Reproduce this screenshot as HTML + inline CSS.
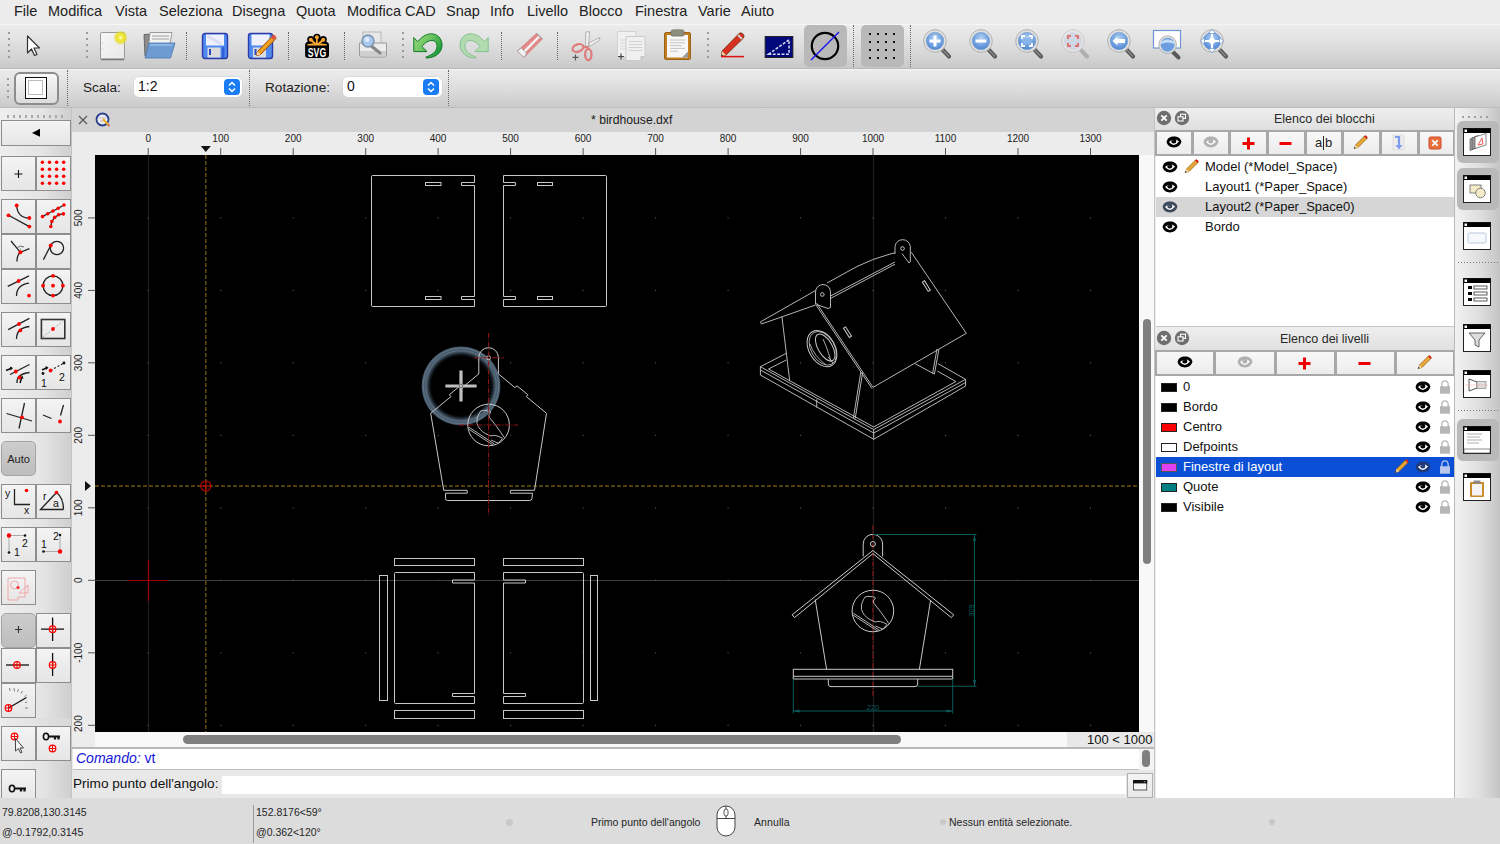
<!DOCTYPE html>
<html><head><meta charset="utf-8">
<style>
*{box-sizing:border-box;margin:0;padding:0}
html,body{width:1500px;height:844px;overflow:hidden;background:#ececec;font-family:"Liberation Sans",sans-serif;color:#111}
.a{position:absolute}
#menubar{left:0;top:0;width:1500px;height:24px;background:#ececec}
#menubar span{position:absolute;top:3px;font-size:14.5px;color:#222}
#tb1{left:0;top:24px;width:1500px;height:45px;background:linear-gradient(#ececec,#e4e4e4 30%,#d6d6d6 70%,#c9c9c9);box-shadow:inset 0 1px #f6f6f6;border-bottom:1px solid #b8b8b8}
#tb2{left:0;top:69px;width:1500px;height:39px;background:linear-gradient(#ececec,#e4e4e4 30%,#d6d6d6 70%,#cacaca);box-shadow:inset 0 1px #f4f4f4;border-bottom:1px solid #bcbcbc}
.sep{position:absolute;width:1px;border-left:1px dotted #666}
.hdl{position:absolute;width:2px;background:repeating-linear-gradient(#9c9c9c 0 2px,transparent 2px 6px)}
#lefttb{left:0;top:108px;width:72px;height:690px;background:linear-gradient(90deg,#eeeeee,#e4e4e4 60%,#cfcfcf);border-right:1px solid #c8c8c8}
.btn{position:absolute;background:linear-gradient(#f2f2f2,#e9e9e9);border:2px solid #8f8f8f}
#mdi{left:72px;top:108px;width:1082px;height:640px;background:#ececec}
#tabbar{left:72px;top:108px;width:1082px;height:24px;background:#d5d5d5}
#canvas{left:95px;top:155px;width:1044px;height:577px;background:#000}
#dock{left:1154px;top:108px;width:301px;height:690px;background:#ececec}
#righttb{left:1455px;top:108px;width:45px;height:690px;background:linear-gradient(90deg,#eeeeee,#d0d0d0)}
#status{left:0;top:798px;width:1500px;height:46px;background:#dcdcdc}
.st{position:absolute;font-size:10.5px;color:#222}
</style></head><body>
<div id="menubar" class="a">
<span style="left:14px">File</span>
<span style="left:48px">Modifica</span>
<span style="left:115px">Vista</span>
<span style="left:159px">Seleziona</span>
<span style="left:232px">Disegna</span>
<span style="left:296px">Quota</span>
<span style="left:347px">Modifica CAD</span>
<span style="left:446px">Snap</span>
<span style="left:490px">Info</span>
<span style="left:527px">Livello</span>
<span style="left:579px">Blocco</span>
<span style="left:635px">Finestra</span>
<span style="left:698px">Varie</span>
<span style="left:741px">Aiuto</span>
</div>
<div id="tb1" class="a">
<!-- handle -->
<div class="hdl" style="left:86px;top:8px;height:26px"></div>
<!-- pointer -->
<svg class="a" style="left:24px;top:10px" width="18" height="24" viewBox="0 0 18 24"><path d="M3.5 2 L3.5 19 L7.5 15 L10.5 21.5 L13 20.5 L10 14 L15.5 14 Z" fill="#fff" stroke="#333" stroke-width="1.2" stroke-linejoin="round"/></svg>
<div class="hdl" style="left:8px;top:8px;height:26px"></div>
<!-- new -->
<svg class="a" style="left:99px;top:7px" width="28" height="30" viewBox="0 0 28 30"><defs><linearGradient id="gnew" x1="0" y1="0" x2="1" y2="1"><stop offset="0" stop-color="#f6f6f6"/><stop offset="1" stop-color="#e8e8e8"/></linearGradient><radialGradient id="gglow"><stop offset="0" stop-color="#ffffd8"/><stop offset=".3" stop-color="#f4ec40"/><stop offset=".65" stop-color="#e8dc20" stop-opacity=".85"/><stop offset="1" stop-color="#e8dc20" stop-opacity="0"/></radialGradient></defs><rect x="1.5" y="1.5" width="24" height="27" rx="1" fill="url(#gnew)" stroke="#9a9a9a" stroke-width="1"/><rect x="2" y="27.5" width="23" height="1.8" fill="#7a7a7a"/><circle cx="21.7" cy="6.7" r="7.5" fill="url(#gglow)"/><path d="M3 12 H4 M3 18 H4" stroke="#bbb" stroke-width=".8"/></svg>
<!-- open -->
<svg class="a" style="left:142px;top:7px" width="34" height="30" viewBox="0 0 34 30"><path d="M2 3.5 L9 3 L8 26 L3 25 Z" fill="#8c8c8c" stroke="#555" stroke-width=".8"/><path d="M8 1.5 L30 1.5 L27 18 L6 20 Z" fill="#f2f2f2" stroke="#888" stroke-width=".8"/><path d="M10 5 L27 5 M10 8 L27 8" stroke="#bdbdbd" stroke-width="1.5"/><path d="M7 12 L33 12 L28.5 27 L3 27 Z" fill="#6d9bd2" stroke="#4a77b0" stroke-width=".8"/><path d="M8 13 L31 13 L30 15 L7.5 15 Z" fill="#8fb6e2"/></svg>
<div class="sep" style="left:186px;top:8px;height:28px"></div>
<!-- save -->
<svg class="a" style="left:201px;top:8px" width="28" height="28" viewBox="0 0 28 28"><rect x="1.5" y="1.5" width="25" height="25" rx="2.5" fill="#4f8af0" stroke="#2c3aa8" stroke-width="1.4"/><rect x="5" y="2.5" width="18" height="11" fill="#eef0fa"/><path d="M6 4 L20 12" stroke="#d8ddf4" stroke-width="3"/><rect x="6.5" y="15.5" width="13" height="10" fill="#dcdcdc"/><rect x="8" y="17" width="2" height="6" fill="#2b46c0"/><rect x="21" y="15" width="2.5" height="11" fill="#2f5fd8"/></svg>
<!-- save as -->
<svg class="a" style="left:247px;top:7px" width="30" height="29" viewBox="0 0 30 29"><rect x="1.5" y="2.5" width="24" height="25" rx="2.5" fill="#4f8af0" stroke="#2c3aa8" stroke-width="1.4"/><rect x="4.5" y="3.5" width="18" height="11" fill="#eef0fa"/><rect x="6" y="16.5" width="13" height="10" fill="#dcdcdc"/><rect x="7.5" y="18" width="2" height="6" fill="#2b46c0"/><path d="M10.5 20.5 L26 4.5 L29 7.5 L13.5 23.5 L9.5 24.5 Z" fill="#f0a020" stroke="#9a4a10" stroke-width="1"/><path d="M24 6.5 L27 3.5 L29.5 6 L26.5 9 Z" fill="#e25040"/><path d="M10.5 20.5 L13.5 23.5 L9.5 24.5 Z" fill="#f4d8a8"/></svg>
<div class="sep" style="left:288px;top:8px;height:28px"></div>
<!-- svg -->
<svg class="a" style="left:304px;top:9px" width="26" height="26" viewBox="0 0 26 26"><rect x="1.1" y="9" width="23.9" height="15.9" rx="3.2" fill="#000"/><circle cx="12.9" cy="4.3" r="3.6" fill="#000"/><circle cx="6.8" cy="6.6" r="3.6" fill="#000"/><circle cx="19.2" cy="6.6" r="3.6" fill="#000"/><path d="M4 8 L22 8 L24 11 L2 11 Z" fill="#000"/><path d="M6.8 6.6 L12.9 4.3 L19.2 6.6 L19 10 L7 10 Z" fill="#000"/><g fill="#f8a732"><circle cx="12.9" cy="4.3" r="2"/><circle cx="6.8" cy="6.7" r="2"/><circle cx="19.2" cy="6.7" r="2"/><path d="M3.2 11.2 Q8 10.3 12.9 10 Q18 10.3 22.8 11.2 L22.8 12.6 L3.2 12.6 Z"/><path d="M12 11 L12.1 4.5 L13.7 4.5 L13.8 11 Z"/><path d="M11 11.5 L6 7.6 L7.5 6 L12.5 10.5 Z"/><path d="M15 11.5 L20 7.6 L18.5 6 L13.5 10.5 Z"/></g><text x="13" y="23.8" font-family="Liberation Sans" font-weight="bold" font-size="13" fill="#fff" text-anchor="middle" textLength="18.4" lengthAdjust="spacingAndGlyphs">SVG</text></svg>
<div class="sep" style="left:344px;top:8px;height:28px"></div>
<!-- print preview -->
<svg class="a" style="left:358px;top:7px" width="30" height="28" viewBox="0 0 30 28"><rect x="5" y="1" width="18" height="13" fill="#e8e8e8" stroke="#aaa" stroke-width=".8"/><path d="M1.5 12 L28.5 12 L28.5 24 Q28.5 26 26.5 26 L3.5 26 Q1.5 26 1.5 24 Z" fill="#ececec" stroke="#9a9a9a" stroke-width="1"/><rect x="2" y="20" width="26" height="5" fill="#cfcfcf"/><path d="M12 14 L22 22" stroke="#888" stroke-width="3.2" stroke-linecap="round"/><circle cx="10" cy="10" r="6" fill="#a9c8ee" stroke="#7b8fa8" stroke-width="1.4"/><circle cx="9" cy="8.5" r="2.5" fill="#dbe9fb"/></svg>
<div class="hdl" style="left:402px;top:8px;height:26px"></div>
<!-- undo -->
<svg class="a" style="left:412px;top:8px" width="32" height="28" viewBox="0 0 32 28"><defs><linearGradient id="gund" x1="0" y1="0" x2="1" y2=".6"><stop offset="0" stop-color="#a0dc78"/><stop offset=".5" stop-color="#6cc462"/><stop offset="1" stop-color="#1e9c3c"/></linearGradient></defs><path d="M1.8 5.5 L1.8 19.6 L15 19.6 L9.9 14.5 C13 10.5 16.5 8.5 20 8.5 C23.5 8.5 25 11.5 25 14.5 C25 19.5 20 23 14.1 25 L14 26 C23 26 30 21 30 13 C30 6 25 1.8 19.4 1.8 C14 1.8 9.5 5 5.7 9.7 Z" fill="url(#gund)" stroke="#0f7a28" stroke-width="1"/></svg>
<!-- redo -->
<svg class="a" style="left:458px;top:8px" width="32" height="28" viewBox="0 0 32 28"><g transform="translate(32 0) scale(-1 1)"><path d="M1.8 5.5 L1.8 19.6 L15 19.6 L9.9 14.5 C13 10.5 16.5 8.5 20 8.5 C23.5 8.5 25 11.5 25 14.5 C25 19.5 20 23 14.1 25 L14 26 C23 26 30 21 30 13 C30 6 25 1.8 19.4 1.8 C14 1.8 9.5 5 5.7 9.7 Z" fill="#b2dcb0" stroke="#86c090" stroke-width="1"/></g></svg>
<div class="sep" style="left:501px;top:8px;height:28px"></div>
<!-- eraser -->
<svg class="a" style="left:515px;top:7px" width="30" height="30" viewBox="0 0 30 30"><ellipse cx="15" cy="26.5" rx="12" ry="1.8" fill="#d4d4d4"/><path d="M21.4 2.4 L27.4 8.1 L9 26.4 L2.4 20.1 Z" fill="#e48888" stroke="#c87070" stroke-width=".6"/><path d="M23.6 4.5 L25.3 6.1 L7.2 24.4 L5.3 22.7 Z" fill="#f4f4f4"/><path d="M2.4 20.1 L6.2 17 L11.6 22.3 L9 26.4 Z" fill="#f2f2f2" stroke="#999" stroke-width=".7"/><path d="M21.4 2.4 L27.4 8.1" stroke="#999" stroke-width="1.2"/></svg>
<div class="sep" style="left:557px;top:8px;height:28px"></div>
<!-- scissors -->
<svg class="a" style="left:570px;top:5px" width="32" height="34" viewBox="0 0 32 34"><path d="M15.8 2.8 L19.6 2.8 L18.5 17.5 L15.5 17 Z" fill="#f0f0f0" stroke="#9a9a9a" stroke-width=".7"/><path d="M19 13.9 L29.7 8.5 L29.7 11 L19 18 Z" fill="#f0f0f0" stroke="#9a9a9a" stroke-width=".7"/><ellipse cx="7.9" cy="19" rx="5.6" ry="3.6" transform="rotate(-20 7.9 19)" fill="none" stroke="#e07a7a" stroke-width="2.2"/><ellipse cx="18.3" cy="25.6" rx="3.2" ry="5.6" fill="none" stroke="#e07a7a" stroke-width="2.2"/><path d="M13 18.5 L17 18 L18.3 20" stroke="#e07a7a" stroke-width="2.2" fill="none"/><path d="M2.5 28.4 H8.5 M5.5 25.4 V31.4" stroke="#555" stroke-width="1.1"/></svg>
<!-- copy -->
<svg class="a" style="left:616px;top:6px" width="32" height="32" viewBox="0 0 32 32"><path d="M1.5 1.5 L20 1.5 L20 27 L1.5 27 Z" fill="#f0f0f0" stroke="#ccc" stroke-width=".8"/><path d="M4 10 L16 10 M4 13 L16 13 M4 16 L16 16 M4 19 L16 19" stroke="#d8d8d8" stroke-width="1"/><path d="M10 6.5 L29 6.5 L29 26 L24.5 30.5 L10 30.5 Z" fill="#f0f0f0" stroke="#c4c4c4" stroke-width=".8"/><path d="M13 11.5 L26 11.5 M13 14.5 L26 14.5 M13 17.5 L26 17.5 M13 20.5 L26 20.5" stroke="#d0d0d0" stroke-width="1"/><path d="M24.5 30.5 L24.5 26 L29 26 Z" fill="#c8c8c8"/><path d="M2 26.5 L8 26.5 M5 23.5 L5 29.5" stroke="#444" stroke-width="1.2"/></svg>
<!-- paste -->
<svg class="a" style="left:663px;top:5px" width="30" height="32" viewBox="0 0 30 32"><rect x="1.5" y="3.5" width="26" height="27" rx="1.5" fill="#c17f22" stroke="#9a6418" stroke-width="1"/><rect x="4" y="6" width="21" height="22.5" fill="#f7f7f7"/><path d="M7 11 L22 11 M7 13.8 L22 13.8 M7 16.6 L19 16.6 M7 19.4 L22 19.4 M7 22.2 L15 22.2" stroke="#c4c4c4" stroke-width="1"/><path d="M19 28.5 L25 22.5 L25 28.5 Z" fill="#9a9a9a"/><rect x="8" y="1" width="13" height="6" rx="1.5" fill="#8e8e80" stroke="#6e6e60" stroke-width=".8"/><rect x="11" y=".5" width="7" height="2" fill="#8e8e80"/></svg>
<div class="hdl" style="left:707px;top:8px;height:26px"></div>
<!-- pencil red -->
<svg class="a" style="left:720px;top:6px" width="26" height="28" viewBox="0 0 26 28"><path d="M2 21 L19 3.5 Q21 2 23 4 Q25 6 23.5 8 L6 25 L1.5 26 Z" fill="#d83020" stroke="#7a3a1a" stroke-width=".9"/><path d="M18 5 L22 9" stroke="#c9c9c9" stroke-width="2.2"/><path d="M2 21 L6 25 L1.5 26 Z" fill="#f0d0a0"/><path d="M1.2 26.3 L2.5 24.8" stroke="#333" stroke-width="1.2"/><path d="M1 26.6 L24 26.6" stroke="#e01010" stroke-width="1.5"/></svg>
<!-- blue rect -->
<svg class="a" style="left:764px;top:12px" width="30" height="22" viewBox="0 0 30 23"><rect x=".5" y=".5" width="29" height="22" fill="#00087a" stroke="#222" stroke-width="1"/><path d="M4 19 L25.5 4 L25.5 19 Z" fill="none" stroke="#d8d8f0" stroke-width="1.6" stroke-dasharray="3 1.6"/></svg>
<!-- circle pressed -->
<div class="a" style="left:804px;top:1px;width:43px;height:42px;background:#b9b9b9;border-radius:5px"></div>
<svg class="a" style="left:804px;top:1px" width="43" height="42" viewBox="0 0 43 42"><circle cx="21" cy="21" r="13.2" fill="none" stroke="#000" stroke-width="2.2"/><path d="M7 35 L35 7" stroke="#1010f0" stroke-width="1.3"/></svg>
<div class="sep" style="left:853px;top:1px;height:42px"></div>
<!-- grid pressed -->
<div class="a" style="left:861px;top:1px;width:43px;height:42px;background:#b9b9b9;border-radius:5px"></div>
<svg class="a" style="left:861px;top:1px" width="43" height="42" viewBox="0 0 43 42"><g fill="#111"><rect x="8" y="8" width="2" height="2"/><rect x="16" y="8" width="2" height="2"/><rect x="24" y="8" width="2" height="2"/><rect x="32" y="8" width="2" height="2"/><rect x="8" y="16" width="2" height="2"/><rect x="16" y="16" width="2" height="2"/><rect x="24" y="16" width="2" height="2"/><rect x="32" y="16" width="2" height="2"/><rect x="8" y="24" width="2" height="2"/><rect x="16" y="24" width="2" height="2"/><rect x="24" y="24" width="2" height="2"/><rect x="32" y="24" width="2" height="2"/><rect x="8" y="32" width="2" height="2"/><rect x="16" y="32" width="2" height="2"/><rect x="24" y="32" width="2" height="2"/><rect x="32" y="32" width="2" height="2"/></g></svg>
<div class="sep" style="left:910px;top:1px;height:42px"></div>
<svg class="a" style="left:921px;top:4px" width="34" height="34" viewBox="0 0 34 34"><defs><radialGradient id="zg935" cx=".5" cy=".35" r=".7"><stop offset="0" stop-color="#b8d4f4"/><stop offset=".6" stop-color="#6d9fe0"/><stop offset="1" stop-color="#4c82cf"/></radialGradient></defs><path d="M21 21 L28 28.5" stroke="#5a5a5a" stroke-width="4.2" stroke-linecap="round"/><path d="M21.5 21.5 L27.5 28" stroke="#8a8a8a" stroke-width="1.2" stroke-linecap="round"/><circle cx="14" cy="13" r="11.3" fill="#e2e2e2" stroke="#b0b0b0" stroke-width="1"/><circle cx="14" cy="13" r="8.8" fill="url(#zg935)" stroke="#7f9fc8" stroke-width=".6"/><path d="M14 7.5 V18.5 M8.5 13 H19.5" stroke="#fff" stroke-width="3"/></svg>
<svg class="a" style="left:967px;top:4px" width="34" height="34" viewBox="0 0 34 34"><defs><radialGradient id="zg981" cx=".5" cy=".35" r=".7"><stop offset="0" stop-color="#b8d4f4"/><stop offset=".6" stop-color="#6d9fe0"/><stop offset="1" stop-color="#4c82cf"/></radialGradient></defs><path d="M21 21 L28 28.5" stroke="#5a5a5a" stroke-width="4.2" stroke-linecap="round"/><path d="M21.5 21.5 L27.5 28" stroke="#8a8a8a" stroke-width="1.2" stroke-linecap="round"/><circle cx="14" cy="13" r="11.3" fill="#e2e2e2" stroke="#b0b0b0" stroke-width="1"/><circle cx="14" cy="13" r="8.8" fill="url(#zg981)" stroke="#7f9fc8" stroke-width=".6"/><path d="M8.5 13 H19.5" stroke="#fff" stroke-width="3"/></svg>
<svg class="a" style="left:1013px;top:4px" width="34" height="34" viewBox="0 0 34 34"><defs><radialGradient id="zg1027" cx=".5" cy=".35" r=".7"><stop offset="0" stop-color="#b8d4f4"/><stop offset=".6" stop-color="#6d9fe0"/><stop offset="1" stop-color="#4c82cf"/></radialGradient></defs><path d="M21 21 L28 28.5" stroke="#5a5a5a" stroke-width="4.2" stroke-linecap="round"/><path d="M21.5 21.5 L27.5 28" stroke="#8a8a8a" stroke-width="1.2" stroke-linecap="round"/><circle cx="14" cy="13" r="11.3" fill="#e2e2e2" stroke="#b0b0b0" stroke-width="1"/><circle cx="14" cy="13" r="8.8" fill="url(#zg1027)" stroke="#7f9fc8" stroke-width=".6"/><path d="M9 11 V8 H12 M16 8 H19 V11 M19 15 V18 H16 M12 18 H9 V15" stroke="#fff" stroke-width="1.8" fill="none"/><rect x="10.5" y="10" width="7" height="6" fill="#8ab4ec"/></svg>
<svg class="a" style="left:1059px;top:4px" width="34" height="34" viewBox="0 0 34 34" opacity=".75"><path d="M21 21 L28 28.5" stroke="#a4a4a4" stroke-width="4.2" stroke-linecap="round"/><circle cx="14" cy="13" r="11.3" fill="#e6e6e6" stroke="#c4c4c4" stroke-width="1"/><circle cx="14" cy="13" r="8.8" fill="#c8d4e4"/><path d="M9 11 V8 H12 M16 8 H19 V11 M19 15 V18 H16 M12 18 H9 V15" stroke="#e05050" stroke-width="2" fill="none"/></svg>
<svg class="a" style="left:1105px;top:4px" width="34" height="34" viewBox="0 0 34 34"><defs><radialGradient id="zg1119" cx=".5" cy=".35" r=".7"><stop offset="0" stop-color="#b8d4f4"/><stop offset=".6" stop-color="#6d9fe0"/><stop offset="1" stop-color="#4c82cf"/></radialGradient></defs><path d="M21 21 L28 28.5" stroke="#5a5a5a" stroke-width="4.2" stroke-linecap="round"/><path d="M21.5 21.5 L27.5 28" stroke="#8a8a8a" stroke-width="1.2" stroke-linecap="round"/><circle cx="14" cy="13" r="11.3" fill="#e2e2e2" stroke="#b0b0b0" stroke-width="1"/><circle cx="14" cy="13" r="8.8" fill="url(#zg1119)" stroke="#7f9fc8" stroke-width=".6"/><path d="M7.5 13 L12.5 8.5 V11 H20 V15 H12.5 V17.5 Z" fill="#fff"/></svg>
<svg class="a" style="left:1152px;top:5px" width="34" height="34" viewBox="0 0 34 34"><rect x="1.5" y="1.5" width="27" height="17.5" fill="#fff" stroke="#6f96d0" stroke-width="1.2"/><path d="M20 22 L26.5 28.5" stroke="#5a5a5a" stroke-width="4" stroke-linecap="round"/><circle cx="15.6" cy="15.7" r="8.8" fill="#e2e2e2" stroke="#b0b0b0" stroke-width="1"/><circle cx="15.6" cy="15.7" r="7" fill="#6d9fe0"/><path d="M8.8 15 Q15.6 12 22.4 15 V13 Q15.6 7.5 8.8 13 Z" fill="#c4dcf6"/></svg>
<svg class="a" style="left:1198px;top:4px" width="34" height="34" viewBox="0 0 34 34"><defs><radialGradient id="zg1212" cx=".5" cy=".35" r=".7"><stop offset="0" stop-color="#b8d4f4"/><stop offset=".6" stop-color="#6d9fe0"/><stop offset="1" stop-color="#4c82cf"/></radialGradient></defs><path d="M21 21 L28 28.5" stroke="#5a5a5a" stroke-width="4.2" stroke-linecap="round"/><path d="M21.5 21.5 L27.5 28" stroke="#8a8a8a" stroke-width="1.2" stroke-linecap="round"/><circle cx="14" cy="13" r="11.3" fill="#e2e2e2" stroke="#b0b0b0" stroke-width="1"/><circle cx="14" cy="13" r="8.8" fill="url(#zg1212)" stroke="#7f9fc8" stroke-width=".6"/><circle cx="14" cy="13" r="3" fill="#fff"/><path d="M14 2.5 V23.5 M3.5 13 H24.5" stroke="#fff" stroke-width="2.2"/><path d="M14 1.5 L10.5 5.5 H17.5 Z M14 24.5 L10.5 20.5 H17.5 Z M2.5 13 L6.5 9.5 V16.5 Z M25.5 13 L21.5 9.5 V16.5 Z" fill="#fff" stroke="#4c82cf" stroke-width=".6"/></svg>
</div>

<div id="tb2" class="a">
<div class="hdl" style="left:7px;top:9px;height:20px"></div>
<div class="a" style="left:14px;top:3px;width:45px;height:33px;border:2px solid #8d8d8d;border-radius:6px;background:linear-gradient(#f8f8f8,#e6e6e6 60%,#dcdcdc)"></div>
<div class="a" style="left:25px;top:7.5px;width:22px;height:22px;border:1.6px solid #111;background:#fff"><div class="a" style="left:2px;top:2px;width:15px;height:15px;border:1px solid #bbb"></div></div>
<div class="sep" style="left:67px;top:1px;height:36px"></div>
<span class="a" style="left:83px;top:11px;font-size:13.6px;color:#222">Scala:</span>
<div class="a" style="left:134px;top:8px;width:108px;height:20px;background:#fff;border-radius:5px;box-shadow:0 0 0 .5px #d0d0d0"></div>
<span class="a" style="left:138px;top:9px;font-size:14px;color:#111">1:2</span>
<div class="a" style="left:224px;top:10px;width:16px;height:16px;background:#1a7cf5;border-radius:4px"></div>
<svg class="a" style="left:224px;top:10px" width="16" height="16" viewBox="0 0 16 16"><path d="M5 6.5 L8 3.5 L11 6.5 M5 9.5 L8 12.5 L11 9.5" fill="none" stroke="#fff" stroke-width="1.5"/></svg>
<div class="sep" style="left:249px;top:1px;height:36px"></div>
<span class="a" style="left:265px;top:11px;font-size:13.6px;color:#222">Rotazione:</span>
<div class="a" style="left:343px;top:8px;width:99px;height:20px;background:#fff;border-radius:5px;box-shadow:0 0 0 .5px #d0d0d0"></div>
<span class="a" style="left:347px;top:9px;font-size:14px;color:#111">0</span>
<div class="a" style="left:423px;top:10px;width:16px;height:16px;background:#1a7cf5;border-radius:4px"></div>
<svg class="a" style="left:423px;top:10px" width="16" height="16" viewBox="0 0 16 16"><path d="M5 6.5 L8 3.5 L11 6.5 M5 9.5 L8 12.5 L11 9.5" fill="none" stroke="#fff" stroke-width="1.5"/></svg>
<div class="sep" style="left:448px;top:1px;height:36px"></div>
</div>
<!--LEFT-->
<div id="lefttb" class="a"></div>
<div class="a" style="left:7px;top:115px;width:60px;height:3px;background:repeating-linear-gradient(90deg,#a8a8a8 0 2px,transparent 2px 6px)"></div>
<div class="a" style="left:1px;top:120px;width:70px;height:26px;background:linear-gradient(#f4f4f4,#ececec 50%,#e6e6e6);border:1px solid #8e8e8e"></div><svg class="a" style="left:1px;top:120px" width="70" height="26" viewBox="0 0 70 26"><path d="M31 12.9 L39 8.8 L39 16.8 Z" fill="#000"/></svg>
<div class="a" style="left:1px;top:156px;width:35px;height:35px;background:linear-gradient(#f4f4f4,#ececec 50%,#e6e6e6);border:1px solid #8e8e8e"></div><svg class="a" style="left:1px;top:156px" width="35" height="35" viewBox="0 0 35 35"><path d="M13.5 18 H21.5 M17.5 14 V22" stroke="#111" stroke-width="1.1"/></svg>
<div class="a" style="left:36px;top:156px;width:35px;height:35px;background:linear-gradient(#f4f4f4,#ececec 50%,#e6e6e6);border:1px solid #8e8e8e"></div><svg class="a" style="left:36px;top:156px" width="35" height="35" viewBox="0 0 35 35"><circle cx="6.4" cy="6.3" r="1.75" fill="#f00"/><circle cx="6.4" cy="13.3" r="1.75" fill="#f00"/><circle cx="6.4" cy="20.3" r="1.75" fill="#f00"/><circle cx="6.4" cy="27.3" r="1.75" fill="#f00"/><circle cx="13.5" cy="6.3" r="1.75" fill="#f00"/><circle cx="13.5" cy="13.3" r="1.75" fill="#f00"/><circle cx="13.5" cy="20.3" r="1.75" fill="#f00"/><circle cx="13.5" cy="27.3" r="1.75" fill="#f00"/><circle cx="20.6" cy="6.3" r="1.75" fill="#f00"/><circle cx="20.6" cy="13.3" r="1.75" fill="#f00"/><circle cx="20.6" cy="20.3" r="1.75" fill="#f00"/><circle cx="20.6" cy="27.3" r="1.75" fill="#f00"/><circle cx="27.699999999999996" cy="6.3" r="1.75" fill="#f00"/><circle cx="27.699999999999996" cy="13.3" r="1.75" fill="#f00"/><circle cx="27.699999999999996" cy="20.3" r="1.75" fill="#f00"/><circle cx="27.699999999999996" cy="27.3" r="1.75" fill="#f00"/></svg>
<div class="a" style="left:1px;top:199px;width:35px;height:35px;background:linear-gradient(#f4f4f4,#ececec 50%,#e6e6e6);border:1px solid #8e8e8e"></div><svg class="a" style="left:1px;top:199px" width="35" height="35" viewBox="0 0 35 35"><path d="M7.5 16.3 L28.4 27.6" stroke="#222" stroke-width="1.3" fill="none"/><path d="M15.7 6.5 Q16.5 19 28.4 19" stroke="#222" stroke-width="1.3" fill="none"/><circle cx="7.5" cy="16.3" r="1.9" fill="#f00"/><circle cx="15.7" cy="6.5" r="1.9" fill="#f00"/><circle cx="28.4" cy="19" r="1.9" fill="#f00"/><circle cx="28.4" cy="27.6" r="1.9" fill="#f00"/></svg>
<div class="a" style="left:36px;top:199px;width:35px;height:35px;background:linear-gradient(#f4f4f4,#ececec 50%,#e6e6e6);border:1px solid #8e8e8e"></div><svg class="a" style="left:36px;top:199px" width="35" height="35" viewBox="0 0 35 35"><path d="M6.5 17.6 L11.7 14.7 L17 12 L22.2 9.3 L28 6" stroke="#222" stroke-width="1.3" fill="none"/><path d="M14.8 27.5 L15.8 22.5 L18.7 18.4 L22.7 15.7 L27.4 14.9" stroke="#222" stroke-width="1.3" fill="none"/><circle cx="6.5" cy="17.6" r="1.8" fill="#f00"/><circle cx="11.7" cy="14.7" r="1.8" fill="#f00"/><circle cx="17" cy="12" r="1.8" fill="#f00"/><circle cx="22.2" cy="9.3" r="1.8" fill="#f00"/><circle cx="28" cy="6" r="1.8" fill="#f00"/><circle cx="14.8" cy="27.5" r="1.8" fill="#f00"/><circle cx="15.8" cy="22.5" r="1.8" fill="#f00"/><circle cx="18.7" cy="18.4" r="1.8" fill="#f00"/><circle cx="22.7" cy="15.7" r="1.8" fill="#f00"/><circle cx="27.4" cy="14.9" r="1.8" fill="#f00"/></svg>
<div class="a" style="left:1px;top:234px;width:35px;height:35px;background:linear-gradient(#f4f4f4,#ececec 50%,#e6e6e6);border:1px solid #8e8e8e"></div><svg class="a" style="left:1px;top:234px" width="35" height="35" viewBox="0 0 35 35"><path d="M10 7 L19.4 18.3 L28.4 14.6" stroke="#222" stroke-width="1.3" fill="none"/><path d="M19.4 18.3 Q16 21 15.8 27.5" stroke="#222" stroke-width="1.3" fill="none"/><path d="M16.5 13.5 Q19 11 23 13" stroke="#444" stroke-width=".8" fill="none"/><circle cx="19.5" cy="15" r=".5" fill="#444"/><circle cx="19.4" cy="18.3" r="2" fill="#f00"/></svg>
<div class="a" style="left:36px;top:234px;width:35px;height:35px;background:linear-gradient(#f4f4f4,#ececec 50%,#e6e6e6);border:1px solid #8e8e8e"></div><svg class="a" style="left:36px;top:234px" width="35" height="35" viewBox="0 0 35 35"><circle cx="20.9" cy="14" r="6.7" stroke="#222" stroke-width="1.3" fill="none"/><path d="M14.7 11.5 L7.4 25.6" stroke="#222" stroke-width="1.3" fill="none"/><circle cx="14.7" cy="11.5" r="2" fill="#f00"/></svg>
<div class="a" style="left:1px;top:269px;width:35px;height:35px;background:linear-gradient(#f4f4f4,#ececec 50%,#e6e6e6);border:1px solid #8e8e8e"></div><svg class="a" style="left:1px;top:269px" width="35" height="35" viewBox="0 0 35 35"><path d="M6.8 17.3 L28 6.8" stroke="#222" stroke-width="1.3" fill="none"/><path d="M15.5 27 Q15.5 16 28 14.2" stroke="#222" stroke-width="1.3" fill="none"/><circle cx="17.6" cy="12" r="1.9" fill="#f00"/><circle cx="28" cy="26.6" r="1.9" fill="#f00"/></svg>
<div class="a" style="left:36px;top:269px;width:35px;height:35px;background:linear-gradient(#f4f4f4,#ececec 50%,#e6e6e6);border:1px solid #8e8e8e"></div><svg class="a" style="left:36px;top:269px" width="35" height="35" viewBox="0 0 35 35"><circle cx="17" cy="16.7" r="9.9" stroke="#222" stroke-width="1.3" fill="none"/><circle cx="17" cy="16.7" r="1.9" fill="#f00"/><circle cx="17" cy="6.8" r="1.9" fill="#f00"/><circle cx="17" cy="26.6" r="1.9" fill="#f00"/><circle cx="7.1" cy="16.7" r="1.9" fill="#f00"/><circle cx="26.9" cy="16.7" r="1.9" fill="#f00"/></svg>
<div class="a" style="left:1px;top:304px;width:70px;height:8px;background:linear-gradient(90deg,#ececec,#d8d8d8)"></div>
<div class="a" style="left:1px;top:312px;width:35px;height:35px;background:linear-gradient(#f4f4f4,#ececec 50%,#e6e6e6);border:1px solid #8e8e8e"></div><svg class="a" style="left:1px;top:312px" width="35" height="35" viewBox="0 0 35 35"><path d="M7.2 17.6 L28.4 6.4" stroke="#222" stroke-width="1.3" fill="none"/><path d="M15.5 27 Q15.5 16 28.4 14.5" stroke="#222" stroke-width="1.3" fill="none"/><circle cx="18" cy="12" r="1.9" fill="#f00"/><circle cx="19.3" cy="18.4" r="1.9" fill="#f00"/></svg>
<div class="a" style="left:36px;top:312px;width:35px;height:35px;background:linear-gradient(#f4f4f4,#ececec 50%,#e6e6e6);border:1px solid #8e8e8e"></div><svg class="a" style="left:36px;top:312px" width="35" height="35" viewBox="0 0 35 35"><rect x="5.4" y="7.5" width="23.4" height="19" stroke="#333" stroke-width="1.6" fill="none"/><path d="M7 25 L27 9" stroke="#999" stroke-width=".8" stroke-dasharray="2 1.5"/><circle cx="17" cy="17" r="1.9" fill="#f00"/></svg>
<div class="a" style="left:1px;top:355px;width:35px;height:35px;background:linear-gradient(#f4f4f4,#ececec 50%,#e6e6e6);border:1px solid #8e8e8e"></div><svg class="a" style="left:1px;top:355px" width="35" height="35" viewBox="0 0 35 35"><path d="M9 19.5 L28.5 9.5" stroke="#222" stroke-width="1.3" fill="none"/><path d="M16 28 Q15.5 19 28.5 17.5" stroke="#222" stroke-width="1.3" fill="none"/><path d="M5 15.5 L11 13" stroke="#111" stroke-width="1.5"/><path d="M9 11.5 L12 13 L9.5 15.5 Z" fill="#111"/><path d="M19 28 L21 22" stroke="#111" stroke-width="1.5"/><path d="M19.5 22.5 L21.5 20.5 L22.5 24 Z" fill="#111"/><circle cx="14.8" cy="16.5" r="1.9" fill="#f00"/><circle cx="18.5" cy="22.5" r="1.9" fill="#f00"/></svg>
<div class="a" style="left:36px;top:355px;width:35px;height:35px;background:linear-gradient(#f4f4f4,#ececec 50%,#e6e6e6);border:1px solid #8e8e8e"></div><svg class="a" style="left:36px;top:355px" width="35" height="35" viewBox="0 0 35 35"><path d="M14.5 15.5 L28 8" stroke="#222" stroke-width="1.1" stroke-dasharray="2.2 1.8"/><path d="M6 15 L11.5 12.5" stroke="#111" stroke-width="1.5"/><path d="M9.5 11 L12.5 12.5 L10 15 Z" fill="#111"/><circle cx="14.5" cy="15.5" r="1.9" fill="#f00"/><circle cx="28" cy="8" r="1.4" fill="#111"/><circle cx="7" cy="18.5" r="1.4" fill="#111"/><text x="23" y="26" font-family="Liberation Sans" font-size="10.5" fill="#111">2</text><text x="5" y="32" font-family="Liberation Sans" font-size="10.5" fill="#111">1</text></svg>
<div class="a" style="left:1px;top:398px;width:35px;height:35px;background:linear-gradient(#f4f4f4,#ececec 50%,#e6e6e6);border:1px solid #8e8e8e"></div><svg class="a" style="left:1px;top:398px" width="35" height="35" viewBox="0 0 35 35"><path d="M5.5 15.5 L31 23" stroke="#222" stroke-width="1.3" fill="none"/><path d="M23.5 5 L18 30.5" stroke="#222" stroke-width="1.3" fill="none"/><circle cx="21" cy="19.3" r="1.9" fill="#f00"/></svg>
<div class="a" style="left:36px;top:398px;width:35px;height:35px;background:linear-gradient(#f4f4f4,#ececec 50%,#e6e6e6);border:1px solid #8e8e8e"></div><svg class="a" style="left:36px;top:398px" width="35" height="35" viewBox="0 0 35 35"><path d="M7 17 L15.5 20.5" stroke="#222" stroke-width="1.3" fill="none"/><path d="M27.5 7 L24.5 17.5" stroke="#222" stroke-width="1.3" fill="none"/><circle cx="24" cy="23.5" r="1.9" fill="#f00"/></svg>
<div class="a" style="left:1px;top:441px;width:35px;height:35px;background:linear-gradient(#cdcdcd,#bdbdbd);border:1px solid #a4a4a4;border-radius:5px"></div><svg class="a" style="left:1px;top:441px" width="35" height="35" viewBox="0 0 35 35"><text x="17.5" y="21.5" font-family="Liberation Sans" font-size="11" fill="#222" text-anchor="middle">Auto</text></svg>
<div class="a" style="left:1px;top:484px;width:35px;height:35px;background:linear-gradient(#f4f4f4,#ececec 50%,#e6e6e6);border:1px solid #8e8e8e"></div><svg class="a" style="left:1px;top:484px" width="35" height="35" viewBox="0 0 35 35"><path d="M13.5 5 V20.5 H29" stroke="#222" stroke-width="1.3" fill="none"/><text x="4" y="13" font-family="Liberation Sans" font-size="10.5" fill="#111">y</text><text x="23" y="30" font-family="Liberation Sans" font-size="10.5" fill="#111">x</text><circle cx="25.5" cy="6.5" r="1.8" fill="#f00"/></svg>
<div class="a" style="left:36px;top:484px;width:35px;height:35px;background:linear-gradient(#f4f4f4,#ececec 50%,#e6e6e6);border:1px solid #8e8e8e"></div><svg class="a" style="left:36px;top:484px" width="35" height="35" viewBox="0 0 35 35"><path d="M27.5 25.5 L4.5 25.5 L20.5 8.5 Q27.5 14 27.5 25.5" stroke="#222" stroke-width="1.3" fill="none"/><text x="7" y="16" font-family="Liberation Sans" font-size="10.5" fill="#111">r</text><text x="17" y="23" font-family="Liberation Sans" font-size="10.5" fill="#111">a</text><circle cx="20.5" cy="8.5" r="1.8" fill="#f00"/></svg>
<div class="a" style="left:1px;top:527px;width:35px;height:35px;background:linear-gradient(#f4f4f4,#ececec 50%,#e6e6e6);border:1px solid #8e8e8e"></div><svg class="a" style="left:1px;top:527px" width="35" height="35" viewBox="0 0 35 35"><path d="M8 8.5 H24 M8 8.5 V25.5" stroke="#999" stroke-width=".8"/><circle cx="8" cy="8.5" r="2.2" fill="#f00"/><circle cx="24" cy="8.5" r="1.3" fill="#111"/><circle cx="8" cy="25.5" r="1.3" fill="#111"/><text x="13" y="29" font-family="Liberation Sans" font-size="10.5" fill="#111">1</text><text x="21" y="20" font-family="Liberation Sans" font-size="10.5" fill="#111">2</text></svg>
<div class="a" style="left:36px;top:527px;width:35px;height:35px;background:linear-gradient(#f4f4f4,#ececec 50%,#e6e6e6);border:1px solid #8e8e8e"></div><svg class="a" style="left:36px;top:527px" width="35" height="35" viewBox="0 0 35 35"><path d="M7.5 24.5 H24 V8" stroke="#999" stroke-width=".8" fill="none"/><circle cx="24" cy="24.5" r="2.2" fill="#f00"/><circle cx="24" cy="8" r="1.3" fill="#111"/><circle cx="7.5" cy="24.5" r="1.3" fill="#111"/><text x="17" y="13" font-family="Liberation Sans" font-size="10.5" fill="#111">2</text><text x="5" y="21" font-family="Liberation Sans" font-size="10.5" fill="#111">1</text></svg>
<div class="a" style="left:1px;top:570px;width:35px;height:35px;background:linear-gradient(#f4f4f4,#ececec 50%,#e6e6e6);border:1px solid #8e8e8e"></div><svg class="a" style="left:1px;top:570px" width="35" height="35" viewBox="0 0 35 35"><path d="M7 8 H24 V27 H17 V30 H7 Z" fill="none" stroke="#f0a0a0" stroke-width=".9"/><circle cx="13.5" cy="15" r="4" fill="none" stroke="#f0a0a0" stroke-width=".9"/><path d="M18 23 L27 15 V23 Z" fill="none" stroke="#f0a0a0" stroke-width=".9"/><circle cx="17" cy="17.5" r="1.6" fill="#f03030"/></svg>
<div class="a" style="left:1px;top:613px;width:35px;height:35px;background:linear-gradient(#cdcdcd,#bdbdbd);border:1px solid #a4a4a4;border-radius:5px"></div><svg class="a" style="left:1px;top:613px" width="35" height="35" viewBox="0 0 35 35"><path d="M14 16.5 H21 M17.5 13 V20" stroke="#333" stroke-width="1.1"/></svg>
<div class="a" style="left:36px;top:613px;width:35px;height:35px;background:linear-gradient(#f4f4f4,#ececec 50%,#e6e6e6);border:1px solid #8e8e8e"></div><svg class="a" style="left:36px;top:613px" width="35" height="35" viewBox="0 0 35 35"><path d="M5 16.2 H28 M16.6 4.5 V28" stroke="#111" stroke-width="1.3"/><circle cx="16.6" cy="16.2" r="3.3" fill="none" stroke="#f00" stroke-width="1.2"/><path d="M13.3 16.2 H19.900000000000002 M16.6 12.899999999999999 V19.5" stroke="#f00" stroke-width="1"/></svg>
<div class="a" style="left:1px;top:648px;width:35px;height:35px;background:linear-gradient(#f4f4f4,#ececec 50%,#e6e6e6);border:1px solid #8e8e8e"></div><svg class="a" style="left:1px;top:648px" width="35" height="35" viewBox="0 0 35 35"><path d="M5 17 H28" stroke="#111" stroke-width="1.3"/><circle cx="16" cy="17" r="3.3" fill="none" stroke="#f00" stroke-width="1.2"/><path d="M12.7 17 H19.3 M16 13.7 V20.3" stroke="#f00" stroke-width="1"/></svg>
<div class="a" style="left:36px;top:648px;width:35px;height:35px;background:linear-gradient(#f4f4f4,#ececec 50%,#e6e6e6);border:1px solid #8e8e8e"></div><svg class="a" style="left:36px;top:648px" width="35" height="35" viewBox="0 0 35 35"><path d="M16.6 5 V28" stroke="#111" stroke-width="1.3"/><circle cx="16.6" cy="17" r="3.3" fill="none" stroke="#f00" stroke-width="1.2"/><path d="M13.3 17 H19.900000000000002 M16.6 13.7 V20.3" stroke="#f00" stroke-width="1"/></svg>
<div class="a" style="left:1px;top:683px;width:35px;height:35px;background:linear-gradient(#f4f4f4,#ececec 50%,#e6e6e6);border:1px solid #8e8e8e"></div><svg class="a" style="left:1px;top:683px" width="35" height="35" viewBox="0 0 35 35"><path d="M7.5 25 L25.5 14.5" stroke="#111" stroke-width="1.3"/><path d="M8.5 5 L9 8 M13 5 L13.5 8.5 M17.5 6 L16.5 9 M21.5 8 L20 10.5 M25.5 12 L23.5 13.5 M26 19 L24 19.5 M27 25 L24 25" stroke="#777" stroke-width=".9"/><circle cx="7.5" cy="25" r="3.3" fill="none" stroke="#f00" stroke-width="1.2"/><path d="M4.2 25 H10.8 M7.5 21.7 V28.3" stroke="#f00" stroke-width="1"/></svg>
<div class="a" style="left:1px;top:718px;width:70px;height:8px;background:linear-gradient(90deg,#ececec,#d8d8d8)"></div>
<div class="a" style="left:1px;top:726px;width:35px;height:35px;background:linear-gradient(#f4f4f4,#ececec 50%,#e6e6e6);border:1px solid #8e8e8e"></div><svg class="a" style="left:1px;top:726px" width="35" height="35" viewBox="0 0 35 35"><circle cx="13.5" cy="10.5" r="3.3" fill="none" stroke="#f00" stroke-width="1.2"/><path d="M10.2 10.5 H16.8 M13.5 7.2 V13.8" stroke="#f00" stroke-width="1"/><path d="M14.5 12.5 L14.5 25 L17.3 22.5 L19.5 27 L21 26.3 L19 22 L22.5 22 Z" fill="#f4f4f4" stroke="#333" stroke-width=".9"/></svg>
<div class="a" style="left:36px;top:726px;width:35px;height:35px;background:linear-gradient(#f4f4f4,#ececec 50%,#e6e6e6);border:1px solid #8e8e8e"></div><svg class="a" style="left:36px;top:726px" width="35" height="35" viewBox="0 0 35 35"><ellipse cx="10" cy="10.5" rx="2.6" ry="3.3" fill="none" stroke="#111" stroke-width="1.6"/><path d="M12.5 10.5 H24 M19 10.5 V13.5 M22.5 10.5 V13.5" stroke="#111" stroke-width="2.2"/><circle cx="16.5" cy="22.5" r="3.3" fill="none" stroke="#f00" stroke-width="1.2"/><path d="M13.2 22.5 H19.8 M16.5 19.2 V25.8" stroke="#f00" stroke-width="1"/></svg>
<div class="a" style="left:1px;top:769px;width:35px;height:35px;background:linear-gradient(#f4f4f4,#ececec 50%,#e6e6e6);border:1px solid #8e8e8e"></div><svg class="a" style="left:1px;top:769px" width="35" height="35" viewBox="0 0 35 35"><ellipse cx="11" cy="19.5" rx="2.6" ry="3.3" fill="none" stroke="#111" stroke-width="1.6"/><path d="M13.5 19.5 H25 M20 19.5 V22.5 M23.5 19.5 V22.5" stroke="#111" stroke-width="2.2"/></svg>
<!--/LEFT-->
<!--MDI-->
<div class="a" style="left:71px;top:108px;width:1px;height:690px;background:#c4c4c4"></div>
<div class="a" style="left:72px;top:108px;width:1082px;height:24px;background:#d3d3d3"></div>
<svg class="a" style="left:77px;top:114px" width="12" height="12" viewBox="0 0 12 12"><path d="M2 2 L10 10 M10 2 L2 10" stroke="#555" stroke-width="1.1"/></svg>
<svg class="a" style="left:95px;top:112px" width="16" height="16" viewBox="0 0 16 16"><circle cx="7.5" cy="7.5" r="6" fill="#e8eef8" stroke="#2a3f8a" stroke-width="1.8"/><path d="M4 6 H11 M5 9 H10" stroke="#c88" stroke-width=".6"/><path d="M8 7 L13.5 13" stroke="#e8b020" stroke-width="2"/><path d="M13 12.5 L14.5 14" stroke="#e06060" stroke-width="2"/></svg>
<span class="a" style="left:591px;top:113px;font-size:12.2px;color:#1a1a1a">* birdhouse.dxf</span>
<div class="a" style="left:72px;top:132px;width:1082px;height:23px;background:#ececec"></div>
<div class="a" style="left:72px;top:155px;width:23px;height:592px;background:#ececec"></div>
<svg class="a" style="left:95px;top:131px" width="1059" height="24" viewBox="95 131 1059 24"><g font-family="Liberation Sans" font-size="10" fill="#222"><text x="148.2" y="142" text-anchor="middle">0</text><text x="220.7" y="142" text-anchor="middle">100</text><text x="293.2" y="142" text-anchor="middle">200</text><text x="365.7" y="142" text-anchor="middle">300</text><text x="438.1" y="142" text-anchor="middle">400</text><text x="510.6" y="142" text-anchor="middle">500</text><text x="583.1" y="142" text-anchor="middle">600</text><text x="655.6" y="142" text-anchor="middle">700</text><text x="728.1" y="142" text-anchor="middle">800</text><text x="800.6" y="142" text-anchor="middle">900</text><text x="873.0" y="142" text-anchor="middle">1000</text><text x="945.5" y="142" text-anchor="middle">1100</text><text x="1018.0" y="142" text-anchor="middle">1200</text><text x="1090.5" y="142" text-anchor="middle">1300</text></g><rect x="147.7" y="148" width="1" height="7" fill="#555"/><rect x="220.2" y="148" width="1" height="7" fill="#555"/><rect x="292.7" y="148" width="1" height="7" fill="#555"/><rect x="365.2" y="148" width="1" height="7" fill="#555"/><rect x="437.6" y="148" width="1" height="7" fill="#555"/><rect x="510.1" y="148" width="1" height="7" fill="#555"/><rect x="582.6" y="148" width="1" height="7" fill="#555"/><rect x="655.1" y="148" width="1" height="7" fill="#555"/><rect x="727.6" y="148" width="1" height="7" fill="#555"/><rect x="800.1" y="148" width="1" height="7" fill="#555"/><rect x="872.5" y="148" width="1" height="7" fill="#555"/><rect x="945.0" y="148" width="1" height="7" fill="#555"/><rect x="1017.5" y="148" width="1" height="7" fill="#555"/><rect x="1090.0" y="148" width="1" height="7" fill="#555"/><path d="M200.8 146 H210.8 L205.8 152 Z" fill="#111"/></svg>
<svg class="a" style="left:72px;top:155px" width="23" height="577" viewBox="72 155 23 577"><g font-family="Liberation Sans" font-size="10" fill="#222"><text x="0" y="0" text-anchor="middle" transform="translate(82 725.3) rotate(-90)">-200</text><text x="0" y="0" text-anchor="middle" transform="translate(82 652.8) rotate(-90)">-100</text><text x="0" y="0" text-anchor="middle" transform="translate(82 580.3) rotate(-90)">0</text><text x="0" y="0" text-anchor="middle" transform="translate(82 507.8) rotate(-90)">100</text><text x="0" y="0" text-anchor="middle" transform="translate(82 435.3) rotate(-90)">200</text><text x="0" y="0" text-anchor="middle" transform="translate(82 362.8) rotate(-90)">300</text><text x="0" y="0" text-anchor="middle" transform="translate(82 290.4) rotate(-90)">400</text><text x="0" y="0" text-anchor="middle" transform="translate(82 217.9) rotate(-90)">500</text></g><rect x="88" y="724.8" width="7" height="1" fill="#555"/><rect x="88" y="652.3" width="7" height="1" fill="#555"/><rect x="88" y="579.8" width="7" height="1" fill="#555"/><rect x="88" y="507.3" width="7" height="1" fill="#555"/><rect x="88" y="434.8" width="7" height="1" fill="#555"/><rect x="88" y="362.3" width="7" height="1" fill="#555"/><rect x="88" y="289.9" width="7" height="1" fill="#555"/><rect x="88" y="217.4" width="7" height="1" fill="#555"/><path d="M85 481 V491 L91 486 Z" fill="#111"/></svg>
<div class="a" style="left:95px;top:155px;width:1044px;height:577px;background:#000"></div>
<!--CANVAS-->
<svg class="a" style="left:95px;top:155px" width="1044" height="577" viewBox="95 155 1044 577">
<path d="M148.5 155 V732 M873.5 155 V732" stroke="#1e1e1e" stroke-width="1.2"/>
<path d="M95 580.5 H1139" stroke="#3e3e3e" stroke-width="1"/>
<g fill="#6a6a6a"><rect x="147.7" y="724.8" width="1" height="1"/><rect x="147.7" y="652.3" width="1" height="1"/><rect x="147.7" y="579.8" width="1" height="1"/><rect x="147.7" y="507.3" width="1" height="1"/><rect x="147.7" y="434.8" width="1" height="1"/><rect x="147.7" y="362.3" width="1" height="1"/><rect x="147.7" y="289.9" width="1" height="1"/><rect x="147.7" y="217.4" width="1" height="1"/><rect x="220.2" y="724.8" width="1" height="1"/><rect x="220.2" y="652.3" width="1" height="1"/><rect x="220.2" y="579.8" width="1" height="1"/><rect x="220.2" y="507.3" width="1" height="1"/><rect x="220.2" y="434.8" width="1" height="1"/><rect x="220.2" y="362.3" width="1" height="1"/><rect x="220.2" y="289.9" width="1" height="1"/><rect x="220.2" y="217.4" width="1" height="1"/><rect x="292.7" y="724.8" width="1" height="1"/><rect x="292.7" y="652.3" width="1" height="1"/><rect x="292.7" y="579.8" width="1" height="1"/><rect x="292.7" y="507.3" width="1" height="1"/><rect x="292.7" y="434.8" width="1" height="1"/><rect x="292.7" y="362.3" width="1" height="1"/><rect x="292.7" y="289.9" width="1" height="1"/><rect x="292.7" y="217.4" width="1" height="1"/><rect x="365.2" y="724.8" width="1" height="1"/><rect x="365.2" y="652.3" width="1" height="1"/><rect x="365.2" y="579.8" width="1" height="1"/><rect x="365.2" y="507.3" width="1" height="1"/><rect x="365.2" y="434.8" width="1" height="1"/><rect x="365.2" y="362.3" width="1" height="1"/><rect x="365.2" y="289.9" width="1" height="1"/><rect x="365.2" y="217.4" width="1" height="1"/><rect x="437.6" y="724.8" width="1" height="1"/><rect x="437.6" y="652.3" width="1" height="1"/><rect x="437.6" y="579.8" width="1" height="1"/><rect x="437.6" y="507.3" width="1" height="1"/><rect x="437.6" y="434.8" width="1" height="1"/><rect x="437.6" y="362.3" width="1" height="1"/><rect x="437.6" y="289.9" width="1" height="1"/><rect x="437.6" y="217.4" width="1" height="1"/><rect x="510.1" y="724.8" width="1" height="1"/><rect x="510.1" y="652.3" width="1" height="1"/><rect x="510.1" y="579.8" width="1" height="1"/><rect x="510.1" y="507.3" width="1" height="1"/><rect x="510.1" y="434.8" width="1" height="1"/><rect x="510.1" y="362.3" width="1" height="1"/><rect x="510.1" y="289.9" width="1" height="1"/><rect x="510.1" y="217.4" width="1" height="1"/><rect x="582.6" y="724.8" width="1" height="1"/><rect x="582.6" y="652.3" width="1" height="1"/><rect x="582.6" y="579.8" width="1" height="1"/><rect x="582.6" y="507.3" width="1" height="1"/><rect x="582.6" y="434.8" width="1" height="1"/><rect x="582.6" y="362.3" width="1" height="1"/><rect x="582.6" y="289.9" width="1" height="1"/><rect x="582.6" y="217.4" width="1" height="1"/><rect x="655.1" y="724.8" width="1" height="1"/><rect x="655.1" y="652.3" width="1" height="1"/><rect x="655.1" y="579.8" width="1" height="1"/><rect x="655.1" y="507.3" width="1" height="1"/><rect x="655.1" y="434.8" width="1" height="1"/><rect x="655.1" y="362.3" width="1" height="1"/><rect x="655.1" y="289.9" width="1" height="1"/><rect x="655.1" y="217.4" width="1" height="1"/><rect x="727.6" y="724.8" width="1" height="1"/><rect x="727.6" y="652.3" width="1" height="1"/><rect x="727.6" y="579.8" width="1" height="1"/><rect x="727.6" y="507.3" width="1" height="1"/><rect x="727.6" y="434.8" width="1" height="1"/><rect x="727.6" y="362.3" width="1" height="1"/><rect x="727.6" y="289.9" width="1" height="1"/><rect x="727.6" y="217.4" width="1" height="1"/><rect x="800.1" y="724.8" width="1" height="1"/><rect x="800.1" y="652.3" width="1" height="1"/><rect x="800.1" y="579.8" width="1" height="1"/><rect x="800.1" y="507.3" width="1" height="1"/><rect x="800.1" y="434.8" width="1" height="1"/><rect x="800.1" y="362.3" width="1" height="1"/><rect x="800.1" y="289.9" width="1" height="1"/><rect x="800.1" y="217.4" width="1" height="1"/><rect x="872.5" y="724.8" width="1" height="1"/><rect x="872.5" y="652.3" width="1" height="1"/><rect x="872.5" y="579.8" width="1" height="1"/><rect x="872.5" y="507.3" width="1" height="1"/><rect x="872.5" y="434.8" width="1" height="1"/><rect x="872.5" y="362.3" width="1" height="1"/><rect x="872.5" y="289.9" width="1" height="1"/><rect x="872.5" y="217.4" width="1" height="1"/><rect x="945.0" y="724.8" width="1" height="1"/><rect x="945.0" y="652.3" width="1" height="1"/><rect x="945.0" y="579.8" width="1" height="1"/><rect x="945.0" y="507.3" width="1" height="1"/><rect x="945.0" y="434.8" width="1" height="1"/><rect x="945.0" y="362.3" width="1" height="1"/><rect x="945.0" y="289.9" width="1" height="1"/><rect x="945.0" y="217.4" width="1" height="1"/><rect x="1017.5" y="724.8" width="1" height="1"/><rect x="1017.5" y="652.3" width="1" height="1"/><rect x="1017.5" y="579.8" width="1" height="1"/><rect x="1017.5" y="507.3" width="1" height="1"/><rect x="1017.5" y="434.8" width="1" height="1"/><rect x="1017.5" y="362.3" width="1" height="1"/><rect x="1017.5" y="289.9" width="1" height="1"/><rect x="1017.5" y="217.4" width="1" height="1"/><rect x="1090.0" y="724.8" width="1" height="1"/><rect x="1090.0" y="652.3" width="1" height="1"/><rect x="1090.0" y="579.8" width="1" height="1"/><rect x="1090.0" y="507.3" width="1" height="1"/><rect x="1090.0" y="434.8" width="1" height="1"/><rect x="1090.0" y="362.3" width="1" height="1"/><rect x="1090.0" y="289.9" width="1" height="1"/><rect x="1090.0" y="217.4" width="1" height="1"/></g>
<path d="M127.5 580.5 H168.5 M148.5 560 V601" stroke="#a00000" stroke-width="1.2"/>
<defs><radialGradient id="ring" cx=".5" cy=".5" r=".5"><stop offset=".72" stop-color="#000" stop-opacity="0"/><stop offset=".8" stop-color="#182028"/><stop offset=".85" stop-color="#3c4c5a"/><stop offset=".885" stop-color="#5a6e80"/><stop offset=".915" stop-color="#445666"/><stop offset=".945" stop-color="#5c7284"/><stop offset=".975" stop-color="#485a6a"/><stop offset="1" stop-color="#3a4a58" stop-opacity=".2"/></radialGradient></defs>
<circle cx="461" cy="385.9" r="39.8" fill="url(#ring)"/>
<path d="M95 486 H1139 M205.8 155 V732" stroke="#6e5210" stroke-width="1.4" stroke-dasharray="4 2"/>
<circle cx="205.8" cy="486" r="5" stroke="#c00000" stroke-width="1.1" fill="none"/><path d="M200.8 486 H210.8 M205.8 481 V491" stroke="#c00000" stroke-width="1"/>
<path d="M371.5 176.5 Q371.5 175.5 372.5 175.5 H474.5 V182.5 H461.5 V185.5 H474.5 V296.5 H461.5 V299.5 H474.5 V306.5 H372.5 Q371.5 306.5 371.5 305.5 Z" stroke="#c8c8c8" stroke-width="1" fill="none"/><rect x="425.5" y="182.5" width="15.5" height="3" stroke="#c8c8c8" stroke-width="1" fill="none"/><rect x="425.5" y="296.5" width="15.5" height="3" stroke="#c8c8c8" stroke-width="1" fill="none"/>
<path d="M606.5 176.5 Q606.5 175.5 605.5 175.5 H503.5 V182.5 H515.5 V185.5 H503.5 V296.5 H515.5 V299.5 H503.5 V306.5 H605.5 Q606.5 306.5 606.5 305.5 Z" stroke="#c8c8c8" stroke-width="1" fill="none"/><rect x="537.5" y="182.5" width="15.0" height="3" stroke="#c8c8c8" stroke-width="1" fill="none"/><rect x="537.5" y="296.5" width="15.0" height="3" stroke="#c8c8c8" stroke-width="1" fill="none"/>
<path d="M394.5 573.5 Q394.5 572.5 395.5 572.5 H474.5 V580 H452.5 V583 H474.5 V693.5 H452.5 V696.5 H474.5 V703.5 H395.5 Q394.5 703.5 394.5 702.5 Z" stroke="#c8c8c8" stroke-width="1" fill="none"/>
<path d="M583.5 573.5 Q583.5 572.5 582.5 572.5 H503.5 V580 H525.5 V583 H503.5 V693.5 H525.5 V696.5 H503.5 V703.5 H582.5 Q583.5 703.5 583.5 702.5 Z" stroke="#c8c8c8" stroke-width="1" fill="none"/>
<rect x="394.5" y="558.5" width="80" height="7" stroke="#c8c8c8" stroke-width="1" fill="none"/>
<rect x="394.5" y="710.5" width="80" height="8" stroke="#c8c8c8" stroke-width="1" fill="none"/>
<rect x="503.5" y="558.5" width="80" height="7" stroke="#c8c8c8" stroke-width="1" fill="none"/>
<rect x="503.5" y="710.5" width="80" height="8" stroke="#c8c8c8" stroke-width="1" fill="none"/>
<rect x="379.5" y="575.5" width="8" height="125" stroke="#c8c8c8" stroke-width="1" fill="none"/>
<rect x="590.5" y="575.5" width="7" height="125" stroke="#c8c8c8" stroke-width="1" fill="none"/>
<path d="M443.7 490.3 L430.7 413.3 L450.9 396.6 L449.4 394.7 L460.2 385.8 L462.3 387.6 L478.8 373.9 V357.5 A9.6 9.6 0 0 1 498.4 357.5 V373.9 L514.9 387.6 L517 385.8 L527.8 394.7 L526.3 396.6 L546.5 413.3 L534.5 490.3 H510.4 V493.2 H532.5 L532 498.5 Q531.8 500.5 529.5 500.5 H447.5 Q445.5 500.5 445.5 498.5 L445.5 493.2 H467.2 V490.3 Z" stroke="#c8c8c8" stroke-width="1" fill="none"/>
<circle cx="488.6" cy="357.8" r="2" stroke="#c8c8c8" stroke-width="1" fill="none"/>
<circle cx="488.6" cy="425" r="20.8" stroke="#c8c8c8" stroke-width="1" fill="none"/>
<path d="M479.2 413.5 Q480 410 483.5 410.3 L488 410.8 Q490 411 491 412 L488.8 415 L489.5 417.5 Q496 425 504.4 437.6 M479.2 413.5 Q476 418 477 423.4 Q479 430 485.6 433.7 M469 427.3 L494.5 444 M468.5 429 L493 445 M485.6 433.7 L491 436 Q495 434 502.6 438.4 L498.4 443.3 L491 440" stroke="#c8c8c8" stroke-width=".9" fill="none"/>
<path d="M488.6 333 V515" stroke="#961414" stroke-width="1" stroke-dasharray="5 1.5 1.2 1.5"/>
<path d="M474 357.8 H504 M459 425 H518" stroke="#961414" stroke-width="1" stroke-dasharray="5 1.5 1.2 1.5"/>
<path d="M872.9 525 V697" stroke="#961414" stroke-width="1" stroke-dasharray="5 1.5 1.2 1.5"/>
<path d="M863.2 556.4 V544 A9.7 9.7 0 0 1 882.6 544 V556.4" stroke="#c8c8c8" stroke-width="1" fill="none"/>
<circle cx="872.9" cy="544" r="2.5" stroke="#c8c8c8" stroke-width="1" fill="none"/>
<path d="M872.9 550.5 L792.1 614.8 L794.5 617.6 L872.9 553.6 L951.3 617.6 L953.7 614.8 Z" stroke="#c8c8c8" stroke-width="1" fill="none"/>
<path d="M815.2 599.4 L826.6 669.3 M930.7 599.8 L919.4 669.3" stroke="#c8c8c8" stroke-width="1" fill="none"/>
<rect x="793.3" y="669.3" width="159.4" height="9.7" stroke="#c8c8c8" stroke-width="1" fill="none"/><path d="M793.3 676.3 H952.7" stroke="#c8c8c8" stroke-width="1" fill="none"/>
<path d="M828.3 679 V684 Q828.3 686.6 831 686.6 H915 Q917.7 686.6 917.7 684 V679" stroke="#c8c8c8" stroke-width="1" fill="none"/>
<circle cx="872.9" cy="611" r="20.8" stroke="#c8c8c8" stroke-width="1" fill="none"/>
<path d="M863.5 599.5 Q864.5 596 868 596.3 L872.5 596.8 Q874.5 597 875.5 598 L873.3 601 L874 603.5 Q880.5 611 888.9 623.6 M863.5 599.5 Q860.5 604 861.5 609.4 Q863.5 616 870.1 619.7 M853.5 613.3 L879 630 M853 615 L877.5 631 M870.1 619.7 L875.5 622 Q879.5 620 887.1 624.4 L882.9 629.3 L875.5 626" stroke="#c8c8c8" stroke-width=".9" fill="none"/>
<path d="M873 534.5 H976.5 M974.5 534.5 V686.3 M917.7 686.3 H976.5 M793.3 679 V713.5 M952.7 679 V713.5 M793.3 711 H952.7" stroke="#0b5c5e" stroke-width="1" fill="none"/>
<path d="M974.5 534.5 L973 541 L976 541 Z M974.5 686.3 L973 680 L976 680 Z M793.3 711 L799.5 709.6 L799.5 712.4 Z M952.7 711 L946.5 709.6 L946.5 712.4 Z" fill="#0b5c5e"/>
<text x="0" y="0" font-family="Liberation Sans" font-size="7.5" fill="#0b5c5e" text-anchor="middle" transform="translate(973.6 610.5) rotate(-90)">309</text>
<text x="873" y="709.5" font-family="Liberation Sans" font-size="7.5" fill="#0b5c5e" text-anchor="middle">220</text>
<path d="M760.4 321.9 L815.5 290.5 M827 283 L857 266.5 Q872 259 890 254 L895 252.8 M760.4 321.9 L761.5 324 L815.5 305 M830.5 296 L895 262 M831 298.2 L895 264.2 M815.5 304.5 V292 A7.5 7.5 0 0 1 830.5 292 V307.5 L828 308.5 L816.5 304.5 M895 254 V246.5 A7.7 7.7 0 0 1 910.3 246.5 V262 L909 263 L902 253.5 M816.5 303 L873 387.4 M816 305 L872 388.6 M911.3 252.2 L966.3 333.3 L873 387.4 M781.9 316.5 L789.7 380.7 M760.4 366.7 L786.3 353.3 M768.5 369 L786.3 360 M760.4 366.7 V375 M760.4 366.7 L873.7 429.6 L965.6 379.3 V386 L873.7 439.3 L760.4 375 M760.4 370 L873.7 433 L965.6 382.5 M768.5 369 L873.7 427 L955.9 381.5 M938.1 363.7 L965.6 379.3 M937.4 371.1 L955.9 381.5 M873.7 429.6 V439.3 M816.7 399.3 V407.4 M862.6 372.6 L855.2 418.5 M860.8 372 L853.4 418 M938.9 349.6 L934.4 374.1 M937 349 L932.6 373.5 M915.2 363.7 L934.4 374.1" stroke="#c8c8c8" stroke-width=".9" fill="none"/>
<circle cx="822.3" cy="294.5" r="1.8" stroke="#c8c8c8" stroke-width="1" fill="none"/><circle cx="902.5" cy="248.5" r="1.8" stroke="#c8c8c8" stroke-width="1" fill="none"/>
<rect x="0" y="0" width="2.5" height="11" transform="translate(843.5 328.2) rotate(-32)" stroke="#c8c8c8" stroke-width="1" fill="none"/>
<rect x="0" y="0" width="2.5" height="11" transform="translate(922.4 282.1) rotate(-32)" stroke="#c8c8c8" stroke-width="1" fill="none"/>
<ellipse cx="822" cy="348.6" rx="13" ry="19.5" transform="rotate(-30 822 348.6)" stroke="#c8c8c8" stroke-width="1" fill="none"/>
<ellipse cx="822.8" cy="348.3" rx="11.8" ry="18.2" transform="rotate(-30 822.8 348.3)" stroke="#bcbcbc" stroke-width=".8" fill="none"/>
<ellipse cx="825.2" cy="347.5" rx="7.2" ry="15" transform="rotate(-30 825.2 347.5)" stroke="#c8c8c8" stroke-width="1" fill="none"/>
<path d="M823 339 Q826 345 829.5 356 L831 362 M828 357 L833 363 M810 344 Q814 356 826 365" stroke="#cfcfcf" stroke-width=".8" fill="none"/>
<path d="M445.4 386 H476.6 M461 370.4 V401.6" stroke="#c0c0c0" stroke-width="3.2"/>
<circle cx="460.9" cy="385.9" r="1.8" fill="none" stroke="#555" stroke-width=".8"/>
</svg>
<!--/CANVAS-->
<div class="a" style="left:1139px;top:155px;width:15px;height:592px;background:#f8f8f8"></div>
<div class="a" style="left:1143px;top:319px;width:8px;height:245px;background:#7f7f7f;border-radius:4px"></div>
<div class="a" style="left:95px;top:732px;width:1044px;height:15px;background:#f8f8f8"></div>
<div class="a" style="left:183px;top:735px;width:718px;height:9px;background:#7f7f7f;border-radius:4.5px"></div>
<div class="a" style="left:1067px;top:732px;width:87px;height:15px;background:#e8e8e8"></div>
<span class="a" style="left:1087px;top:732px;font-size:13px;color:#111">100 &lt; 1000</span>
<div class="a" style="left:72px;top:747px;width:1082px;height:51px;background:#e8e8e8;border-top:2px solid #b8b8b8"></div>
<div class="a" style="left:73px;top:749px;width:1081px;height:21px;background:#fff;border-bottom:1px solid #bdbdbd"></div>
<div class="a" style="left:1139px;top:749px;width:15px;height:21px;background:#f4f4f4"></div>
<div class="a" style="left:1142px;top:750px;width:8px;height:17px;background:#7f7f7f;border-radius:4px"></div>
<span class="a" style="left:76px;top:750px;font-size:14px;color:#1414dc"><i>Comando:</i> vt</span>
<span class="a" style="left:73px;top:776px;font-size:13.6px;color:#111">Primo punto dell'angolo:</span>
<div class="a" style="left:222px;top:776px;width:904px;height:18px;background:#fff"></div>
<div class="a" style="left:1127px;top:773px;width:26px;height:25px;background:linear-gradient(#f4f4f4,#e8e8e8);border:1px solid #b0b0b0"></div>
<svg class="a" style="left:1132px;top:779px" width="16" height="12" viewBox="0 0 16 12"><rect x="1.5" y="1.5" width="13.2" height="9.5" fill="#f6f6f6" stroke="#555" stroke-width="1"/><rect x="1" y="1" width="14.2" height="3.4" fill="#111"/><circle cx="12.5" cy="2.6" r=".8" fill="#888"/></svg>
<!--/MDI-->
<!--DOCK-->
<div class="a" style="left:1154px;top:108px;width:301px;height:690px;background:#ececec;border-left:1px solid #c4c4c4"></div>
<div class="a" style="left:1155px;top:108px;width:300px;height:22px;background:linear-gradient(#eeeeee,#e0e0e0)"></div>
<svg class="a" style="left:1156px;top:110px" width="34" height="16" viewBox="0 0 34 16"><circle cx="8" cy="8" r="7.2" fill="#6e6e6e"/><path d="M5.3 5.3 L10.7 10.7 M10.7 5.3 L5.3 10.7" stroke="#fff" stroke-width="1.8"/><circle cx="26" cy="8" r="7.2" fill="#6e6e6e"/><rect x="24.5" y="4.2" width="5" height="4.2" fill="none" stroke="#fff" stroke-width="1.1"/><rect x="22" y="6.8" width="5" height="4.2" fill="#6e6e6e" stroke="#fff" stroke-width="1.1"/></svg>
<span class="a" style="left:1274px;top:112px;font-size:12.5px;color:#2a2a2a">Elenco dei blocchi</span>
<div class="a" style="left:1155px;top:130px;width:38px;height:26px;background:linear-gradient(#f8f8f8,#ececec);border:2px solid #a8a8a8"></div><div class="a" style="left:1192px;top:130px;width:38px;height:26px;background:linear-gradient(#f8f8f8,#ececec);border:2px solid #a8a8a8"></div><div class="a" style="left:1229px;top:130px;width:39px;height:26px;background:linear-gradient(#f8f8f8,#ececec);border:2px solid #a8a8a8"></div><div class="a" style="left:1267px;top:130px;width:39px;height:26px;background:linear-gradient(#f8f8f8,#ececec);border:2px solid #a8a8a8"></div><div class="a" style="left:1305px;top:130px;width:38px;height:26px;background:linear-gradient(#f8f8f8,#ececec);border:2px solid #a8a8a8"></div><div class="a" style="left:1342px;top:130px;width:39px;height:26px;background:linear-gradient(#f8f8f8,#ececec);border:2px solid #a8a8a8"></div><div class="a" style="left:1380px;top:130px;width:39px;height:26px;background:linear-gradient(#f8f8f8,#ececec);border:2px solid #a8a8a8"></div><div class="a" style="left:1418px;top:130px;width:37px;height:26px;background:linear-gradient(#f8f8f8,#ececec);border:2px solid #a8a8a8"></div>
<svg class="a" style="left:1166px;top:136px" width="16" height="12" viewBox="0 0 16 12"><path d="M0.6 6 C1.2 2 4.2 0.4 8 0.4 C11.8 0.4 14.6 2 15.4 5.6 C14.6 9.6 11.6 11.4 8 11.4 C4.4 11.4 1.2 9.6 0.6 6 Z" fill="#000"/><path d="M3 6 Q8 0.6 13 5.6 Q8 12 3 6 Z" fill="#fff"/><circle cx="7.8" cy="5" r="2.5" fill="#000"/><path d="M6.6 4.2 L7.6 5.4" stroke="#fff" stroke-width=".6" opacity=".6"/></svg>
<svg class="a" style="left:1203px;top:136px" width="16" height="12" viewBox="0 0 16 12"><path d="M0.6 6 C1.2 2 4.2 0.4 8 0.4 C11.8 0.4 14.6 2 15.4 5.6 C14.6 9.6 11.6 11.4 8 11.4 C4.4 11.4 1.2 9.6 0.6 6 Z" fill="#b0b0b0"/><path d="M3 6 Q8 0.6 13 5.6 Q8 12 3 6 Z" fill="#fff"/><circle cx="7.8" cy="5" r="2.5" fill="#b0b0b0"/><path d="M6.6 4.2 L7.6 5.4" stroke="#fff" stroke-width=".6" opacity=".6"/></svg>
<svg class="a" style="left:1242px;top:137px" width="13" height="13" viewBox="0 0 13 13"><path d="M6.5 0.5 V12.5 M0.5 6.5 H12.5" stroke="#e00" stroke-width="3"/></svg>
<svg class="a" style="left:1279px;top:141px" width="13" height="5" viewBox="0 0 13 5"><path d="M0.5 2.5 H12.5" stroke="#e00" stroke-width="3"/></svg>
<span class="a" style="left:1315px;top:135px;font-size:13px;color:#222">a</span><div class="a" style="left:1323px;top:136px;width:1px;height:14px;background:#222"></div><span class="a" style="left:1325px;top:135px;font-size:13px;color:#222">b</span>
<svg class="a" style="left:1353px;top:135px" width="15" height="15" viewBox="0 0 15 15"><path d="M1.5 13.5 L2.5 10 L11.5 1 Q12.5 0.5 13.5 1.5 Q14.5 2.5 14 3.5 L5 12.5 Z" fill="#e6a832" stroke="#8a5a18" stroke-width=".7"/><path d="M11 1.5 L13.5 4 L14.3 3.2 Q14.5 2 13.5 1 Q12.5 .3 11.8 .8 Z" fill="#e02020"/><path d="M1.5 13.5 L2.5 10 L5 12.5 Z" fill="#f2d8a8"/><path d="M1.2 13.8 L2 12" stroke="#333" stroke-width="1"/></svg>
<svg class="a" style="left:1391px;top:134px" width="15" height="18" viewBox="0 0 15 18"><rect x="2" y="1" width="11" height="15" fill="#ececec" stroke="#d4d4d4" stroke-width=".6"/><path d="M4 3 H8 V13" fill="none" stroke="#7b9cf0" stroke-width="2.2"/><path d="M4.5 11 L8 15.5 L11.5 11 Z" fill="#7b9cf0"/></svg>
<svg class="a" style="left:1428px;top:136px" width="14" height="14" viewBox="0 0 14 14"><rect x="1" y="1" width="12" height="12" rx="1.5" fill="#e8703a" stroke="#d04a2a" stroke-width="1"/><path d="M4.3 4.3 L9.7 9.7 M9.7 4.3 L4.3 9.7" stroke="#fff" stroke-width="1.8"/></svg>
<div class="a" style="left:1156px;top:156px;width:298px;height:171px;background:#fff;border-bottom:1px solid #c8c8c8"></div>
<div class="a" style="left:1156px;top:197px;width:298px;height:20px;background:#d6d6d6"></div>
<svg class="a" style="left:1162px;top:161px" width="16" height="12" viewBox="0 0 16 12"><path d="M0.6 6 C1.2 2 4.2 0.4 8 0.4 C11.8 0.4 14.6 2 15.4 5.6 C14.6 9.6 11.6 11.4 8 11.4 C4.4 11.4 1.2 9.6 0.6 6 Z" fill="#000"/><path d="M3 6 Q8 0.6 13 5.6 Q8 12 3 6 Z" fill="#fff"/><circle cx="7.8" cy="5" r="2.5" fill="#000"/><path d="M6.6 4.2 L7.6 5.4" stroke="#fff" stroke-width=".6" opacity=".6"/></svg>
<svg class="a" style="left:1184px;top:159px" width="15" height="15" viewBox="0 0 15 15"><path d="M1.5 13.5 L2.5 10 L11.5 1 Q12.5 0.5 13.5 1.5 Q14.5 2.5 14 3.5 L5 12.5 Z" fill="#e6a832" stroke="#8a5a18" stroke-width=".7"/><path d="M11 1.5 L13.5 4 L14.3 3.2 Q14.5 2 13.5 1 Q12.5 .3 11.8 .8 Z" fill="#e02020"/><path d="M1.5 13.5 L2.5 10 L5 12.5 Z" fill="#f2d8a8"/><path d="M1.2 13.8 L2 12" stroke="#333" stroke-width="1"/></svg>
<span class="a" style="left:1205px;top:159px;font-size:13px;color:#111">Model (*Model_Space)</span>
<svg class="a" style="left:1162px;top:181px" width="16" height="12" viewBox="0 0 16 12"><path d="M0.6 6 C1.2 2 4.2 0.4 8 0.4 C11.8 0.4 14.6 2 15.4 5.6 C14.6 9.6 11.6 11.4 8 11.4 C4.4 11.4 1.2 9.6 0.6 6 Z" fill="#000"/><path d="M3 6 Q8 0.6 13 5.6 Q8 12 3 6 Z" fill="#fff"/><circle cx="7.8" cy="5" r="2.5" fill="#000"/><path d="M6.6 4.2 L7.6 5.4" stroke="#fff" stroke-width=".6" opacity=".6"/></svg>
<span class="a" style="left:1205px;top:179px;font-size:13px;color:#111">Layout1 (*Paper_Space)</span>
<svg class="a" style="left:1162px;top:201px" width="16" height="12" viewBox="0 0 16 12"><path d="M0.6 6 C1.2 2 4.2 0.4 8 0.4 C11.8 0.4 14.6 2 15.4 5.6 C14.6 9.6 11.6 11.4 8 11.4 C4.4 11.4 1.2 9.6 0.6 6 Z" fill="#3d4a5c"/><path d="M3 6 Q8 0.6 13 5.6 Q8 12 3 6 Z" fill="#fff"/><circle cx="7.8" cy="5" r="2.5" fill="#3d4a5c"/><path d="M6.6 4.2 L7.6 5.4" stroke="#fff" stroke-width=".6" opacity=".6"/></svg>
<span class="a" style="left:1205px;top:199px;font-size:13px;color:#111">Layout2 (*Paper_Space0)</span>
<svg class="a" style="left:1162px;top:221px" width="16" height="12" viewBox="0 0 16 12"><path d="M0.6 6 C1.2 2 4.2 0.4 8 0.4 C11.8 0.4 14.6 2 15.4 5.6 C14.6 9.6 11.6 11.4 8 11.4 C4.4 11.4 1.2 9.6 0.6 6 Z" fill="#000"/><path d="M3 6 Q8 0.6 13 5.6 Q8 12 3 6 Z" fill="#fff"/><circle cx="7.8" cy="5" r="2.5" fill="#000"/><path d="M6.6 4.2 L7.6 5.4" stroke="#fff" stroke-width=".6" opacity=".6"/></svg>
<span class="a" style="left:1205px;top:219px;font-size:13px;color:#111">Bordo</span>
<div class="a" style="left:1155px;top:328px;width:300px;height:22px;background:linear-gradient(#eeeeee,#e0e0e0)"></div>
<svg class="a" style="left:1156px;top:330px" width="34" height="16" viewBox="0 0 34 16"><circle cx="8" cy="8" r="7.2" fill="#6e6e6e"/><path d="M5.3 5.3 L10.7 10.7 M10.7 5.3 L5.3 10.7" stroke="#fff" stroke-width="1.8"/><circle cx="26" cy="8" r="7.2" fill="#6e6e6e"/><rect x="24.5" y="4.2" width="5" height="4.2" fill="none" stroke="#fff" stroke-width="1.1"/><rect x="22" y="6.8" width="5" height="4.2" fill="#6e6e6e" stroke="#fff" stroke-width="1.1"/></svg>
<span class="a" style="left:1280px;top:332px;font-size:12.5px;color:#2a2a2a">Elenco dei livelli</span>
<div class="a" style="left:1155px;top:350px;width:60px;height:26px;background:linear-gradient(#f8f8f8,#ececec);border:2px solid #a8a8a8"></div><div class="a" style="left:1214px;top:350px;width:62px;height:26px;background:linear-gradient(#f8f8f8,#ececec);border:2px solid #a8a8a8"></div><div class="a" style="left:1275px;top:350px;width:61px;height:26px;background:linear-gradient(#f8f8f8,#ececec);border:2px solid #a8a8a8"></div><div class="a" style="left:1335px;top:350px;width:61px;height:26px;background:linear-gradient(#f8f8f8,#ececec);border:2px solid #a8a8a8"></div><div class="a" style="left:1395px;top:350px;width:60px;height:26px;background:linear-gradient(#f8f8f8,#ececec);border:2px solid #a8a8a8"></div>
<svg class="a" style="left:1177px;top:356px" width="16" height="12" viewBox="0 0 16 12"><path d="M0.6 6 C1.2 2 4.2 0.4 8 0.4 C11.8 0.4 14.6 2 15.4 5.6 C14.6 9.6 11.6 11.4 8 11.4 C4.4 11.4 1.2 9.6 0.6 6 Z" fill="#000"/><path d="M3 6 Q8 0.6 13 5.6 Q8 12 3 6 Z" fill="#fff"/><circle cx="7.8" cy="5" r="2.5" fill="#000"/><path d="M6.6 4.2 L7.6 5.4" stroke="#fff" stroke-width=".6" opacity=".6"/></svg>
<svg class="a" style="left:1237px;top:356px" width="16" height="12" viewBox="0 0 16 12"><path d="M0.6 6 C1.2 2 4.2 0.4 8 0.4 C11.8 0.4 14.6 2 15.4 5.6 C14.6 9.6 11.6 11.4 8 11.4 C4.4 11.4 1.2 9.6 0.6 6 Z" fill="#b0b0b0"/><path d="M3 6 Q8 0.6 13 5.6 Q8 12 3 6 Z" fill="#fff"/><circle cx="7.8" cy="5" r="2.5" fill="#b0b0b0"/><path d="M6.6 4.2 L7.6 5.4" stroke="#fff" stroke-width=".6" opacity=".6"/></svg>
<svg class="a" style="left:1298px;top:357px" width="13" height="13" viewBox="0 0 13 13"><path d="M6.5 0.5 V12.5 M0.5 6.5 H12.5" stroke="#e00" stroke-width="3"/></svg>
<svg class="a" style="left:1358px;top:361px" width="13" height="5" viewBox="0 0 13 5"><path d="M0.5 2.5 H12.5" stroke="#e00" stroke-width="3"/></svg>
<svg class="a" style="left:1417px;top:355px" width="15" height="15" viewBox="0 0 15 15"><path d="M1.5 13.5 L2.5 10 L11.5 1 Q12.5 0.5 13.5 1.5 Q14.5 2.5 14 3.5 L5 12.5 Z" fill="#e6a832" stroke="#8a5a18" stroke-width=".7"/><path d="M11 1.5 L13.5 4 L14.3 3.2 Q14.5 2 13.5 1 Q12.5 .3 11.8 .8 Z" fill="#e02020"/><path d="M1.5 13.5 L2.5 10 L5 12.5 Z" fill="#f2d8a8"/><path d="M1.2 13.8 L2 12" stroke="#333" stroke-width="1"/></svg>
<div class="a" style="left:1156px;top:376px;width:298px;height:422px;background:#fff"></div>
<div class="a" style="left:1156px;top:457px;width:298px;height:20px;background:#0b4fd6"></div>
<div class="a" style="left:1161px;top:383px;width:16px;height:9px;background:#000;border:1px solid #222"></div>
<span class="a" style="left:1183px;top:379px;font-size:13px;color:#111">0</span>
<svg class="a" style="left:1415px;top:381px" width="16" height="12" viewBox="0 0 16 12"><path d="M0.6 6 C1.2 2 4.2 0.4 8 0.4 C11.8 0.4 14.6 2 15.4 5.6 C14.6 9.6 11.6 11.4 8 11.4 C4.4 11.4 1.2 9.6 0.6 6 Z" fill="#000"/><path d="M3 6 Q8 0.6 13 5.6 Q8 12 3 6 Z" fill="#fff"/><circle cx="7.8" cy="5" r="2.5" fill="#000"/><path d="M6.6 4.2 L7.6 5.4" stroke="#fff" stroke-width=".6" opacity=".6"/></svg>
<svg class="a" style="left:1440px;top:380px" width="11" height="15" viewBox="0 0 11 15"><path d="M1.8 7 V5 Q1.8 0.9 5 0.9 Q8.2 0.9 8.2 5 V7" fill="none" stroke="#b6b6b6" stroke-width="1.3"/><rect x="0" y="6.3" width="10" height="7.4" fill="#b6b6b6"/></svg>
<div class="a" style="left:1161px;top:403px;width:16px;height:9px;background:#000;border:1px solid #222"></div>
<span class="a" style="left:1183px;top:399px;font-size:13px;color:#111">Bordo</span>
<svg class="a" style="left:1415px;top:401px" width="16" height="12" viewBox="0 0 16 12"><path d="M0.6 6 C1.2 2 4.2 0.4 8 0.4 C11.8 0.4 14.6 2 15.4 5.6 C14.6 9.6 11.6 11.4 8 11.4 C4.4 11.4 1.2 9.6 0.6 6 Z" fill="#000"/><path d="M3 6 Q8 0.6 13 5.6 Q8 12 3 6 Z" fill="#fff"/><circle cx="7.8" cy="5" r="2.5" fill="#000"/><path d="M6.6 4.2 L7.6 5.4" stroke="#fff" stroke-width=".6" opacity=".6"/></svg>
<svg class="a" style="left:1440px;top:400px" width="11" height="15" viewBox="0 0 11 15"><path d="M1.8 7 V5 Q1.8 0.9 5 0.9 Q8.2 0.9 8.2 5 V7" fill="none" stroke="#b6b6b6" stroke-width="1.3"/><rect x="0" y="6.3" width="10" height="7.4" fill="#b6b6b6"/></svg>
<div class="a" style="left:1161px;top:423px;width:16px;height:9px;background:#f00;border:1px solid #222"></div>
<span class="a" style="left:1183px;top:419px;font-size:13px;color:#111">Centro</span>
<svg class="a" style="left:1415px;top:421px" width="16" height="12" viewBox="0 0 16 12"><path d="M0.6 6 C1.2 2 4.2 0.4 8 0.4 C11.8 0.4 14.6 2 15.4 5.6 C14.6 9.6 11.6 11.4 8 11.4 C4.4 11.4 1.2 9.6 0.6 6 Z" fill="#000"/><path d="M3 6 Q8 0.6 13 5.6 Q8 12 3 6 Z" fill="#fff"/><circle cx="7.8" cy="5" r="2.5" fill="#000"/><path d="M6.6 4.2 L7.6 5.4" stroke="#fff" stroke-width=".6" opacity=".6"/></svg>
<svg class="a" style="left:1440px;top:420px" width="11" height="15" viewBox="0 0 11 15"><path d="M1.8 7 V5 Q1.8 0.9 5 0.9 Q8.2 0.9 8.2 5 V7" fill="none" stroke="#b6b6b6" stroke-width="1.3"/><rect x="0" y="6.3" width="10" height="7.4" fill="#b6b6b6"/></svg>
<div class="a" style="left:1161px;top:443px;width:16px;height:9px;background:#fff;border:1px solid #222"></div>
<span class="a" style="left:1183px;top:439px;font-size:13px;color:#111">Defpoints</span>
<svg class="a" style="left:1415px;top:441px" width="16" height="12" viewBox="0 0 16 12"><path d="M0.6 6 C1.2 2 4.2 0.4 8 0.4 C11.8 0.4 14.6 2 15.4 5.6 C14.6 9.6 11.6 11.4 8 11.4 C4.4 11.4 1.2 9.6 0.6 6 Z" fill="#000"/><path d="M3 6 Q8 0.6 13 5.6 Q8 12 3 6 Z" fill="#fff"/><circle cx="7.8" cy="5" r="2.5" fill="#000"/><path d="M6.6 4.2 L7.6 5.4" stroke="#fff" stroke-width=".6" opacity=".6"/></svg>
<svg class="a" style="left:1440px;top:440px" width="11" height="15" viewBox="0 0 11 15"><path d="M1.8 7 V5 Q1.8 0.9 5 0.9 Q8.2 0.9 8.2 5 V7" fill="none" stroke="#b6b6b6" stroke-width="1.3"/><rect x="0" y="6.3" width="10" height="7.4" fill="#b6b6b6"/></svg>
<div class="a" style="left:1161px;top:463px;width:16px;height:9px;background:#e040f0;border:1px solid #555"></div>
<span class="a" style="left:1183px;top:459px;font-size:13px;color:#fff">Finestre di layout</span>
<svg class="a" style="left:1394px;top:459px" width="15" height="15" viewBox="0 0 15 15"><path d="M1.5 13.5 L2.5 10 L11.5 1 Q12.5 0.5 13.5 1.5 Q14.5 2.5 14 3.5 L5 12.5 Z" fill="#e6a832" stroke="#8a5a18" stroke-width=".7"/><path d="M11 1.5 L13.5 4 L14.3 3.2 Q14.5 2 13.5 1 Q12.5 .3 11.8 .8 Z" fill="#e02020"/><path d="M1.5 13.5 L2.5 10 L5 12.5 Z" fill="#f2d8a8"/><path d="M1.2 13.8 L2 12" stroke="#333" stroke-width="1"/></svg>
<svg class="a" style="left:1415px;top:461px" width="16" height="12" viewBox="0 0 16 12"><path d="M0.6 6 C1.2 2 4.2 0.4 8 0.4 C11.8 0.4 14.6 2 15.4 5.6 C14.6 9.6 11.6 11.4 8 11.4 C4.4 11.4 1.2 9.6 0.6 6 Z" fill="#1e3a7a"/><path d="M3 6 Q8 0.6 13 5.6 Q8 12 3 6 Z" fill="#fff"/><circle cx="7.8" cy="5" r="2.5" fill="#1e3a7a"/><path d="M6.6 4.2 L7.6 5.4" stroke="#fff" stroke-width=".6" opacity=".6"/></svg>
<svg class="a" style="left:1440px;top:460px" width="11" height="15" viewBox="0 0 11 15"><path d="M1.8 7 V5 Q1.8 0.9 5 0.9 Q8.2 0.9 8.2 5 V7" fill="none" stroke="#b8c8ec" stroke-width="1.3"/><rect x="0" y="6.3" width="10" height="7.4" fill="#b8c8ec"/></svg>
<div class="a" style="left:1161px;top:483px;width:16px;height:9px;background:#008080;border:1px solid #222"></div>
<span class="a" style="left:1183px;top:479px;font-size:13px;color:#111">Quote</span>
<svg class="a" style="left:1415px;top:481px" width="16" height="12" viewBox="0 0 16 12"><path d="M0.6 6 C1.2 2 4.2 0.4 8 0.4 C11.8 0.4 14.6 2 15.4 5.6 C14.6 9.6 11.6 11.4 8 11.4 C4.4 11.4 1.2 9.6 0.6 6 Z" fill="#000"/><path d="M3 6 Q8 0.6 13 5.6 Q8 12 3 6 Z" fill="#fff"/><circle cx="7.8" cy="5" r="2.5" fill="#000"/><path d="M6.6 4.2 L7.6 5.4" stroke="#fff" stroke-width=".6" opacity=".6"/></svg>
<svg class="a" style="left:1440px;top:480px" width="11" height="15" viewBox="0 0 11 15"><path d="M1.8 7 V5 Q1.8 0.9 5 0.9 Q8.2 0.9 8.2 5 V7" fill="none" stroke="#b6b6b6" stroke-width="1.3"/><rect x="0" y="6.3" width="10" height="7.4" fill="#b6b6b6"/></svg>
<div class="a" style="left:1161px;top:503px;width:16px;height:9px;background:#000;border:1px solid #222"></div>
<span class="a" style="left:1183px;top:499px;font-size:13px;color:#111">Visibile</span>
<svg class="a" style="left:1415px;top:501px" width="16" height="12" viewBox="0 0 16 12"><path d="M0.6 6 C1.2 2 4.2 0.4 8 0.4 C11.8 0.4 14.6 2 15.4 5.6 C14.6 9.6 11.6 11.4 8 11.4 C4.4 11.4 1.2 9.6 0.6 6 Z" fill="#000"/><path d="M3 6 Q8 0.6 13 5.6 Q8 12 3 6 Z" fill="#fff"/><circle cx="7.8" cy="5" r="2.5" fill="#000"/><path d="M6.6 4.2 L7.6 5.4" stroke="#fff" stroke-width=".6" opacity=".6"/></svg>
<svg class="a" style="left:1440px;top:500px" width="11" height="15" viewBox="0 0 11 15"><path d="M1.8 7 V5 Q1.8 0.9 5 0.9 Q8.2 0.9 8.2 5 V7" fill="none" stroke="#b6b6b6" stroke-width="1.3"/><rect x="0" y="6.3" width="10" height="7.4" fill="#b6b6b6"/></svg>
<div class="a" style="left:1454px;top:108px;width:1px;height:690px;background:#b8b8b8"></div>
<div class="a" style="left:1455px;top:108px;width:45px;height:690px;background:linear-gradient(90deg,#f2f2f2,#dcdcdc 60%,#c4c4c4)"></div>
<div class="a" style="left:1462px;top:116px;width:28px;height:2px;background:repeating-linear-gradient(90deg,#a0a0a0 0 2px,transparent 2px 6px)"></div>
<div class="a" style="left:1457px;top:121px;width:42px;height:42px;background:#b9b9b9;border-radius:6px"></div><svg class="a" style="left:1462px;top:127px" width="30" height="30" viewBox="0 0 30 30"><rect x="1.5" y="1.5" width="27" height="27" fill="#fff" stroke="#222" stroke-width="1"/><rect x="1.5" y="1.5" width="27" height="4.5" fill="#000"/><rect x="2.5" y="2.5" width="2.5" height="2.5" fill="#fff"/><path d="M8 12 L14 9.5 L14 21 L8 23.5 Z" fill="#aaa" stroke="#555" stroke-width=".7"/><path d="M10 11 L16 8.5 L16 20 L10 22.5 Z" fill="#999" stroke="#555" stroke-width=".7"/><path d="M13 10 L24 6.5 L24 18 L13 21.5 Z" fill="#fff" stroke="#555" stroke-width=".7"/><path d="M16 18 L20 11 L21 17 Z" fill="none" stroke="#e33" stroke-width=".8"/></svg>
<div class="a" style="left:1457px;top:168px;width:42px;height:42px;background:#b9b9b9;border-radius:6px"></div><svg class="a" style="left:1462px;top:174px" width="30" height="30" viewBox="0 0 30 30"><rect x="1.5" y="1.5" width="27" height="27" fill="#fff" stroke="#222" stroke-width="1"/><rect x="1.5" y="1.5" width="27" height="4.5" fill="#000"/><rect x="2.5" y="2.5" width="2.5" height="2.5" fill="#fff"/><rect x="8" y="11" width="11" height="8" fill="#f4ecc8" stroke="#666" stroke-width=".8"/><circle cx="18.5" cy="19" r="4.8" fill="#f4ecc8" stroke="#666" stroke-width=".8"/></svg>
<svg class="a" style="left:1462px;top:221px" width="30" height="30" viewBox="0 0 30 30"><rect x="1.5" y="1.5" width="27" height="27" fill="#fff" stroke="#222" stroke-width="1"/><rect x="1.5" y="1.5" width="27" height="4.5" fill="#000"/><rect x="2.5" y="2.5" width="2.5" height="2.5" fill="#fff"/><rect x="6" y="12" width="18" height="10" rx="1.5" fill="#f6f8fc" stroke="#b8c8e0" stroke-width="1"/></svg>
<div class="a" style="left:1458px;top:262px;width:40px;height:1px;background:repeating-linear-gradient(90deg,#777 0 1px,transparent 1px 3px)"></div>
<svg class="a" style="left:1462px;top:277px" width="30" height="30" viewBox="0 0 30 30"><rect x="1.5" y="1.5" width="27" height="27" fill="#fff" stroke="#222" stroke-width="1"/><rect x="1.5" y="1.5" width="27" height="4.5" fill="#000"/><rect x="2.5" y="2.5" width="2.5" height="2.5" fill="#fff"/><rect x="6" y="9" width="4" height="3" fill="#000"/><rect x="6" y="15" width="4" height="3" fill="#000"/><rect x="6" y="21" width="4" height="3" fill="#000"/><rect x="12" y="9" width="13" height="3" fill="none" stroke="#333" stroke-width=".8"/><rect x="12" y="15" width="13" height="3" fill="none" stroke="#333" stroke-width=".8"/><rect x="12" y="21" width="13" height="3" fill="none" stroke="#333" stroke-width=".8"/></svg>
<svg class="a" style="left:1462px;top:323px" width="30" height="30" viewBox="0 0 30 30"><rect x="1.5" y="1.5" width="27" height="27" fill="#fff" stroke="#222" stroke-width="1"/><rect x="1.5" y="1.5" width="27" height="4.5" fill="#000"/><rect x="2.5" y="2.5" width="2.5" height="2.5" fill="#fff"/><path d="M7 10 H23 L17 17 V24 L13 22 V17 Z" fill="#ddd" stroke="#555" stroke-width=".9"/></svg>
<svg class="a" style="left:1462px;top:369px" width="30" height="30" viewBox="0 0 30 30"><rect x="1.5" y="1.5" width="27" height="27" fill="#fff" stroke="#222" stroke-width="1"/><rect x="1.5" y="1.5" width="27" height="4.5" fill="#000"/><rect x="2.5" y="2.5" width="2.5" height="2.5" fill="#fff"/><path d="M7 10 L15 13 V19 L7 22 Z" fill="#fff" stroke="#444" stroke-width=".9"/><rect x="15" y="12.5" width="9" height="7" fill="#ddd" stroke="#888" stroke-width=".7"/><path d="M4 16 H26" stroke="#f88" stroke-width=".6" stroke-dasharray="1.5 1"/></svg>
<div class="a" style="left:1458px;top:410px;width:40px;height:1px;background:repeating-linear-gradient(90deg,#777 0 1px,transparent 1px 3px)"></div>
<div class="a" style="left:1457px;top:419px;width:42px;height:42px;background:#b9b9b9;border-radius:6px"></div><svg class="a" style="left:1462px;top:425px" width="30" height="30" viewBox="0 0 30 30"><rect x="1.5" y="1.5" width="27" height="27" fill="#fff" stroke="#222" stroke-width="1"/><rect x="1.5" y="1.5" width="27" height="4.5" fill="#000"/><rect x="2.5" y="2.5" width="2.5" height="2.5" fill="#fff"/><path d="M5 9 H20 M5 12 H18 M5 15 H20 M5 18 H17" stroke="#999" stroke-width=".8"/><rect x="2" y="24" width="26" height="4" fill="#fff" stroke="#444" stroke-width=".6"/></svg>
<svg class="a" style="left:1462px;top:472px" width="30" height="30" viewBox="0 0 30 30"><rect x="1.5" y="1.5" width="27" height="27" fill="#fff" stroke="#222" stroke-width="1"/><rect x="1.5" y="1.5" width="27" height="4.5" fill="#000"/><rect x="2.5" y="2.5" width="2.5" height="2.5" fill="#fff"/><rect x="8" y="10" width="14" height="15" rx="1" fill="#c98a2a"/><rect x="10" y="12" width="10" height="11.5" fill="#f4f4f4"/><rect x="11.5" y="8.5" width="7" height="3" fill="#888"/></svg>
<div class="a" style="left:0;top:798px;width:1500px;height:46px;background:#dcdcdc"></div>
<span class="a" style="left:2px;top:806px;font-size:10.5px;color:#262626">79.8208,130.3145</span>
<span class="a" style="left:2px;top:826px;font-size:10.5px;color:#262626">@-0.1792,0.3145</span>
<div class="a" style="left:253px;top:805px;width:1px;height:38px;background:#9a9a9a"></div>
<span class="a" style="left:256px;top:806px;font-size:10.5px;color:#262626">152.8176&lt;59°</span>
<span class="a" style="left:256px;top:826px;font-size:10.5px;color:#262626">@0.362&lt;120°</span>
<div class="a" style="left:506px;top:819px;width:7px;height:7px;border-radius:50%;background:#c8c8c8"></div>
<span class="a" style="left:591px;top:816px;font-size:10.5px;color:#262626;letter-spacing:0px">Primo punto dell'angolo</span>
<svg class="a" style="left:716px;top:805px" width="21" height="32" viewBox="0 0 21 32"><rect x="1" y="1" width="18" height="30" rx="9" fill="#fff" stroke="#444" stroke-width="1"/><path d="M1 13.5 H19 M10 1 V13.5" stroke="#444" stroke-width="1"/><rect x="8" y="4" width="4" height="7" rx="2" fill="#fff" stroke="#444" stroke-width=".9"/></svg>
<span class="a" style="left:754px;top:816px;font-size:10.5px;color:#262626;letter-spacing:.1px">Annulla</span>
<div class="a" style="left:940px;top:819px;width:6px;height:6px;border-radius:50%;background:#c8c8c8"></div>
<span class="a" style="left:949px;top:816px;font-size:10.5px;color:#262626;letter-spacing:0px">Nessun entità selezionate.</span>
<div class="a" style="left:1269px;top:819px;width:6px;height:6px;border-radius:50%;background:#c8c8c8"></div>
<!--/DOCK-->
</body></html>
